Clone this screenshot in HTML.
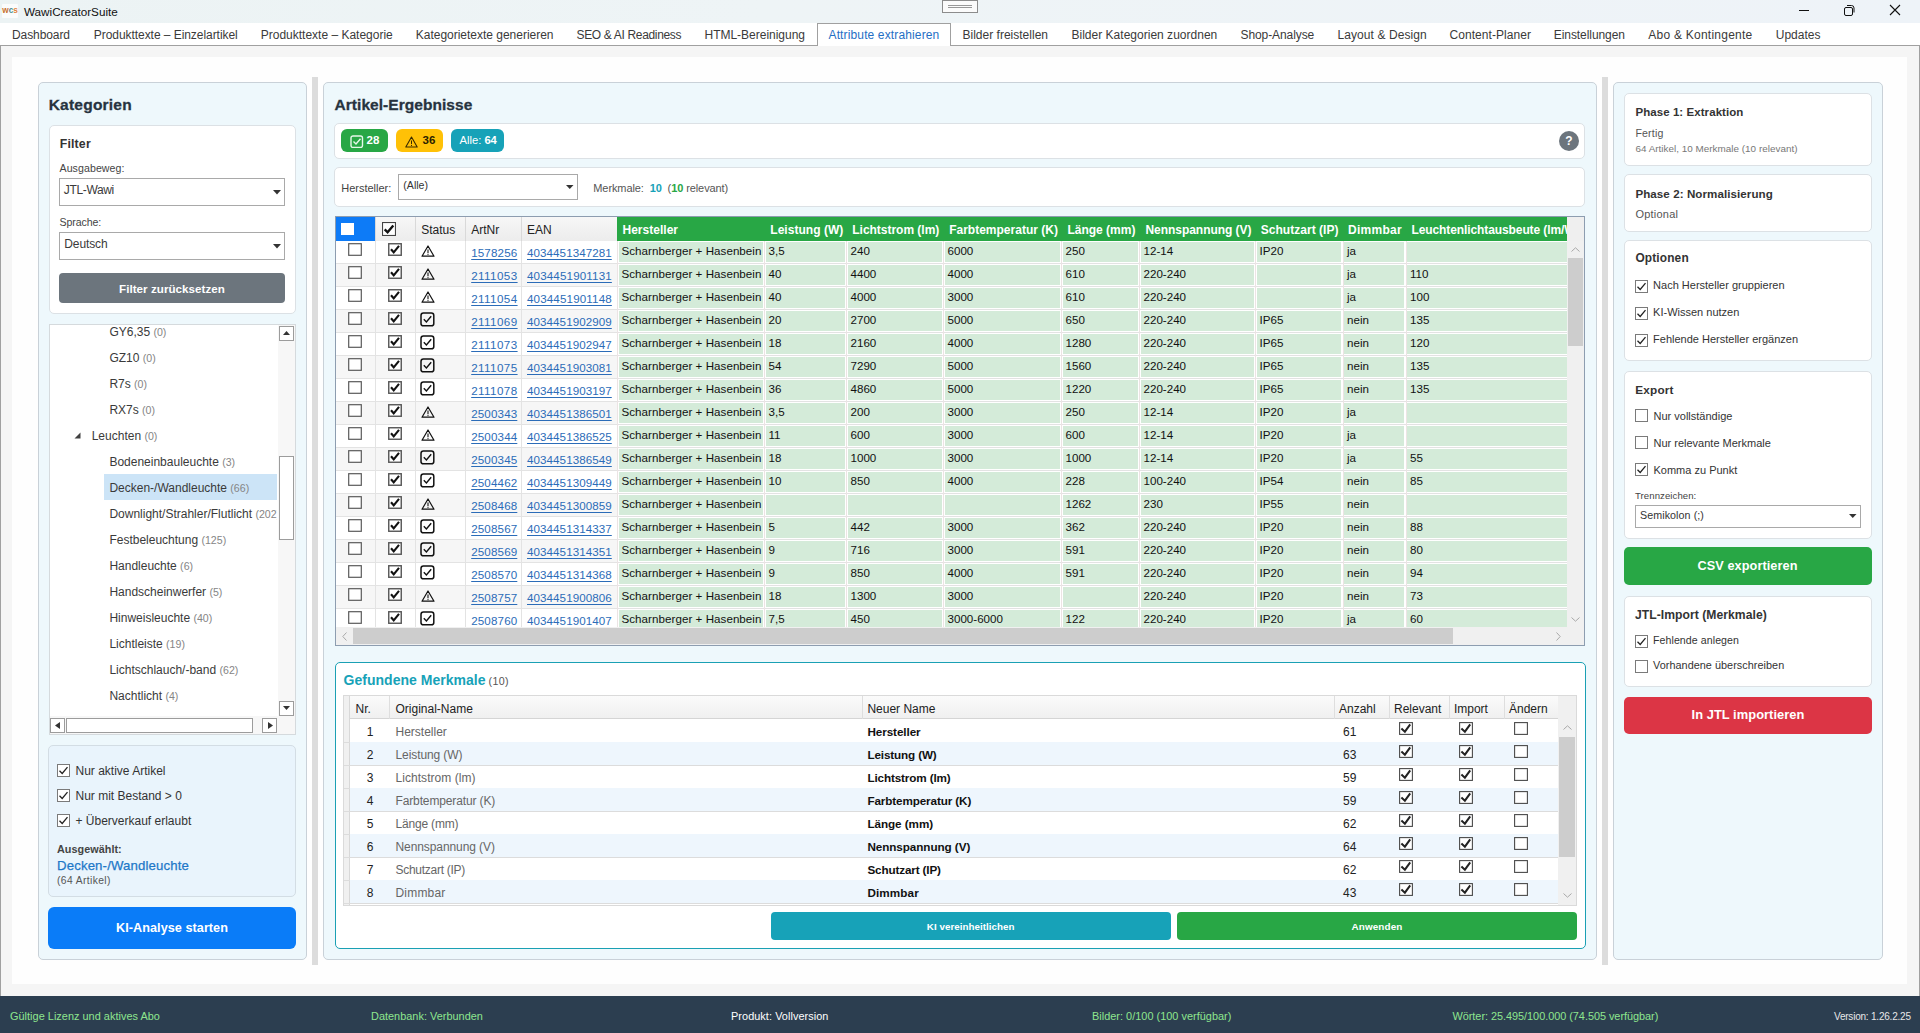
<!DOCTYPE html><html><head><meta charset="utf-8"><title>WawiCreatorSuite</title><style>
*{margin:0;padding:0;box-sizing:border-box}
html,body{width:1920px;height:1033px;overflow:hidden;background:#fff;font-family:"Liberation Sans",sans-serif}
.t{position:absolute;white-space:nowrap}
.b{position:absolute}
</style></head><body>
<div class="b" style="left:0px;top:0px;width:1920px;height:23px;background:linear-gradient(90deg,#ecf3f4,#eef4f6 40%,#eef3f8)"></div>
<div class="b" style="left:2px;top:3.5px;width:16px;height:14px;background:#fbfcfc;border-radius:1px"></div>
<div class="t" style="left:2.3px;top:6.66px;font-size:8.2px;line-height:8.2px;font-weight:bold;color:#222;letter-spacing:0px"><span style="color:#c8702e">w</span><span style="color:#4d8c90">c</span><span style="color:#e0823e">s</span></div>
<div class="t" style="left:24px;top:5.80px;font-size:11.7px;line-height:11.7px;font-weight:normal;color:#111;">WawiCreatorSuite</div>
<svg class="b" style="left:942px;top:0px" width="37" height="14" viewBox="0 0 37 14"><rect x="0.5" y="0.5" width="35" height="12" fill="#fbfbfb" stroke="#8c8c8c" stroke-width="1"/><path d="M6 5.5 H30 M6 7.5 H30" stroke="#8c8c8c" stroke-width="0.9"/></svg>
<div class="b" style="left:1799px;top:10px;width:10px;height:1px;background:#111"></div>
<svg class="b" style="left:1843px;top:4px" width="13" height="12" viewBox="0 0 13 12"><rect x="1.5" y="3.5" width="8" height="8" rx="1.5" fill="none" stroke="#111" stroke-width="1"/><path d="M4 1.5 h4.5 a2.5 2.5 0 0 1 2.5 2.5 v4.5" fill="none" stroke="#111" stroke-width="1"/></svg>
<svg class="b" style="left:1889px;top:4px" width="12" height="12" viewBox="0 0 12 12"><path d="M1 1 L11 11 M11 1 L1 11" stroke="#111" stroke-width="1.1"/></svg>
<div class="b" style="left:0px;top:23px;width:1920px;height:23px;background:#fff"></div>
<div class="b" style="left:0px;top:45px;width:1920px;height:1px;background:#a0a0a0"></div>
<div class="b" style="left:817px;top:23px;width:134px;height:23px;background:#fff;border:1px solid #a0a0a0;border-bottom:none"></div>
<div class="t" style="left:12.0px;top:28.84px;font-size:12px;line-height:12px;font-weight:normal;color:#3a3a3a;letter-spacing:-0.088px;">Dashboard</div>
<div class="t" style="left:93.75px;top:28.84px;font-size:12px;line-height:12px;font-weight:normal;color:#3a3a3a;letter-spacing:-0.052px;">Produkttexte – Einzelartikel</div>
<div class="t" style="left:260.75px;top:28.84px;font-size:12px;line-height:12px;font-weight:normal;color:#3a3a3a;letter-spacing:-0.004px;">Produkttexte – Kategorie</div>
<div class="t" style="left:415.75px;top:28.84px;font-size:12px;line-height:12px;font-weight:normal;color:#3a3a3a;letter-spacing:-0.014px;">Kategorietexte generieren</div>
<div class="t" style="left:576.5px;top:28.84px;font-size:12px;line-height:12px;font-weight:normal;color:#3a3a3a;letter-spacing:-0.337px;">SEO &amp; AI Readiness</div>
<div class="t" style="left:704.5px;top:28.84px;font-size:12px;line-height:12px;font-weight:normal;color:#3a3a3a;letter-spacing:-0.014px;">HTML-Bereinigung</div>
<div class="t" style="left:828.5px;top:28.84px;font-size:12px;line-height:12px;font-weight:normal;color:#1f6fc5;letter-spacing:0.135px;">Attribute extrahieren</div>
<div class="t" style="left:962.5px;top:28.84px;font-size:12px;line-height:12px;font-weight:normal;color:#3a3a3a;letter-spacing:0.008px;">Bilder freistellen</div>
<div class="t" style="left:1071.5px;top:28.84px;font-size:12px;line-height:12px;font-weight:normal;color:#3a3a3a;letter-spacing:0.013px;">Bilder Kategorien zuordnen</div>
<div class="t" style="left:1240.5px;top:28.84px;font-size:12px;line-height:12px;font-weight:normal;color:#3a3a3a;letter-spacing:-0.088px;">Shop-Analyse</div>
<div class="t" style="left:1337.5px;top:28.84px;font-size:12px;line-height:12px;font-weight:normal;color:#3a3a3a;letter-spacing:0.085px;">Layout &amp; Design</div>
<div class="t" style="left:1449.5px;top:28.84px;font-size:12px;line-height:12px;font-weight:normal;color:#3a3a3a;letter-spacing:0.061px;">Content-Planer</div>
<div class="t" style="left:1553.75px;top:28.84px;font-size:12px;line-height:12px;font-weight:normal;color:#3a3a3a;letter-spacing:-0.067px;">Einstellungen</div>
<div class="t" style="left:1648.25px;top:28.84px;font-size:12px;line-height:12px;font-weight:normal;color:#3a3a3a;letter-spacing:0.245px;">Abo &amp; Kontingente</div>
<div class="t" style="left:1775.75px;top:28.84px;font-size:12px;line-height:12px;font-weight:normal;color:#3a3a3a;letter-spacing:0.009px;">Updates</div>
<div class="b" style="left:0px;top:46px;width:1920px;height:950px;background:#f5f5f5;border-left:1px solid #a0a0a0;border-right:1px solid #a0a0a0"></div>
<div class="b" style="left:12px;top:57px;width:1895px;height:927px;background:#fefefe"></div>
<div class="b" style="left:312px;top:77px;width:6px;height:888px;background:#dcdcdc"></div>
<div class="b" style="left:1602px;top:77px;width:6px;height:888px;background:#dcdcdc"></div>
<div class="b" style="left:38px;top:82px;width:269px;height:878px;background:#eef8fc;border:1px solid #c9d1d8;border-radius:5px"></div>
<div class="b" style="left:323px;top:82px;width:1274px;height:878px;background:#eef8fc;border:1px solid #c9d1d8;border-radius:5px"></div>
<div class="b" style="left:1613px;top:82px;width:270px;height:878px;background:#eef8fc;border:1px solid #c9d1d8;border-radius:5px"></div>
<div class="b" style="left:0px;top:996px;width:1920px;height:37px;background:#2c3e50"></div>
<div class="t" style="left:10px;top:1011.07px;font-size:10.9px;line-height:10.9px;font-weight:normal;color:#8ee68e;letter-spacing:0.032px;">Gültige Lizenz und aktives Abo</div>
<div class="t" style="left:371px;top:1011.07px;font-size:10.9px;line-height:10.9px;font-weight:normal;color:#8ee68e;letter-spacing:0.026px;">Datenbank: Verbunden</div>
<div class="t" style="left:731px;top:1011.07px;font-size:10.9px;line-height:10.9px;font-weight:normal;color:#ffffff;letter-spacing:0.061px;">Produkt: Vollversion</div>
<div class="t" style="left:1092px;top:1011.07px;font-size:10.9px;line-height:10.9px;font-weight:normal;color:#8ee68e;letter-spacing:0.027px;">Bilder: 0/100 (100 verfügbar)</div>
<div class="t" style="left:1452.5px;top:1011.07px;font-size:10.9px;line-height:10.9px;font-weight:normal;color:#8ee68e;letter-spacing:-0.031px;">Wörter: 25.495/100.000 (74.505 verfügbar)</div>
<div class="t" style="left:1834px;top:1011.83px;font-size:10px;line-height:10px;font-weight:normal;color:#e8e8e8;letter-spacing:-0.213px;">Version: 1.26.2.25</div>
<div class="t" style="left:48.7px;top:96.88px;font-size:15.5px;line-height:15.5px;font-weight:bold;color:#27333f;letter-spacing:0.227px;-webkit-text-stroke:0.3px #27333f">Kategorien</div>
<div class="b" style="left:49px;top:125px;width:247px;height:189px;background:#fff;border:1px solid #dce1e5;border-radius:5px"></div>
<div class="t" style="left:59.7px;top:138.29px;font-size:12.3px;line-height:12.3px;font-weight:bold;color:#333;letter-spacing:0.186px;">Filter</div>
<div class="t" style="left:59.5px;top:163.03px;font-size:10.6px;line-height:10.6px;font-weight:normal;color:#444;letter-spacing:0.076px;">Ausgabeweg:</div>
<div class="b" style="left:59px;top:178px;width:226px;height:28px;background:#fff;border:1px solid #a9a9a9"></div>
<div class="t" style="left:63.8px;top:183.64px;font-size:12px;line-height:12px;font-weight:normal;color:#3a3a3a;letter-spacing:-0.355px;">JTL-Wawi</div>
<svg class="b" style="left:273px;top:190px" width="8" height="4.5" viewBox="0 0 8 4.5"><path d="M0 0 L8 0 L4.0 4.5 Z" fill="#333"/></svg>
<div class="t" style="left:59.5px;top:216.73px;font-size:10.6px;line-height:10.6px;font-weight:normal;color:#444;letter-spacing:-0.104px;">Sprache:</div>
<div class="b" style="left:59px;top:232px;width:226px;height:28px;background:#fff;border:1px solid #a9a9a9"></div>
<div class="t" style="left:64.3px;top:237.84px;font-size:12px;line-height:12px;font-weight:normal;color:#3a3a3a;letter-spacing:-0.120px;">Deutsch</div>
<svg class="b" style="left:273px;top:244px" width="8" height="4.5" viewBox="0 0 8 4.5"><path d="M0 0 L8 0 L4.0 4.5 Z" fill="#333"/></svg>
<div class="b" style="left:59px;top:273px;width:226px;height:30px;background:#6c757d;border-radius:4px"></div>
<div class="t" style="left:-28.00px;width:400px;text-align:center;top:283.38px;font-size:11.6px;line-height:11.6px;font-weight:bold;color:#fff;letter-spacing:0.051px;">Filter zurücksetzen</div>
<div class="b" style="left:48.5px;top:324px;width:247.5px;height:411px;background:#fff;border:1px solid #d5dadd"></div>
<div class="b" style="left:277.5px;top:325px;width:17.5px;height:409px;background:#f7f7f7"></div>
<div class="b" style="left:49.5px;top:716px;width:228px;height:18px;background:#f7f7f7"></div>
<div class="b" style="left:279px;top:326px;width:15px;height:15px;background:#fff;border:1.5px solid #9c9c9c"></div>
<svg class="b" style="left:283px;top:331px" width="7" height="4" viewBox="0 0 7 4"><path d="M0 4 L7 4 L3.5 0 Z" fill="#333"/></svg>
<div class="b" style="left:279px;top:456px;width:15px;height:84px;background:#fff;border:1.5px solid #9c9c9c"></div>
<div class="b" style="left:279px;top:701px;width:15px;height:15px;background:#fff;border:1.5px solid #9c9c9c"></div>
<svg class="b" style="left:283px;top:706px" width="7" height="4" viewBox="0 0 7 4"><path d="M0 0 L7 0 L3.5 4 Z" fill="#333"/></svg>
<div class="b" style="left:50px;top:718px;width:15px;height:15px;background:#fff;border:1.5px solid #9c9c9c"></div>
<svg class="b" style="left:55px;top:722px" width="5" height="7" viewBox="0 0 5 7"><path d="M5 0 L5 7 L0 3.5 Z" fill="#333"/></svg>
<div class="b" style="left:66px;top:718px;width:187px;height:15px;background:#fff;border:1.5px solid #9c9c9c"></div>
<div class="b" style="left:262px;top:718px;width:15px;height:15px;background:#fff;border:1.5px solid #9c9c9c"></div>
<svg class="b" style="left:268px;top:722px" width="5" height="7" viewBox="0 0 5 7"><path d="M0 0 L0 7 L5 3.5 Z" fill="#333"/></svg>
<div class="b" style="left:104px;top:474px;width:173px;height:26px;background:#cce4f7"></div>
<div class="b" style="left:49px;top:325px;width:228px;height:391px;overflow:hidden">
<div class="t" style="left:60.4px;top:0.94px;font-size:12px;line-height:12px;color:#3a3a3a">GY6,35 <span style="font-size:10.6px;color:#858585">(0)</span></div>
<div class="t" style="left:60.4px;top:26.94px;font-size:12px;line-height:12px;color:#3a3a3a">GZ10 <span style="font-size:10.6px;color:#858585">(0)</span></div>
<div class="t" style="left:60.4px;top:52.94px;font-size:12px;line-height:12px;color:#3a3a3a">R7s <span style="font-size:10.6px;color:#858585">(0)</span></div>
<div class="t" style="left:60.4px;top:78.94px;font-size:12px;line-height:12px;color:#3a3a3a">RX7s <span style="font-size:10.6px;color:#858585">(0)</span></div>
<div class="t" style="left:42.7px;top:104.94px;font-size:12px;line-height:12px;color:#3a3a3a">Leuchten <span style="font-size:10.6px;color:#858585">(0)</span></div>
<div class="t" style="left:60.4px;top:130.94px;font-size:12px;line-height:12px;color:#3a3a3a">Bodeneinbauleuchte <span style="font-size:10.6px;color:#858585">(3)</span></div>
<div class="t" style="left:60.4px;top:156.94px;font-size:12px;line-height:12px;color:#3a3a3a">Decken-/Wandleuchte <span style="font-size:10.6px;color:#858585">(66)</span></div>
<div class="t" style="left:60.4px;top:182.94px;font-size:12px;line-height:12px;color:#3a3a3a">Downlight/Strahler/Flutlicht <span style="font-size:10.6px;color:#858585">(202)</span></div>
<div class="t" style="left:60.4px;top:208.94px;font-size:12px;line-height:12px;color:#3a3a3a">Festbeleuchtung <span style="font-size:10.6px;color:#858585">(125)</span></div>
<div class="t" style="left:60.4px;top:234.94px;font-size:12px;line-height:12px;color:#3a3a3a">Handleuchte <span style="font-size:10.6px;color:#858585">(6)</span></div>
<div class="t" style="left:60.4px;top:260.94px;font-size:12px;line-height:12px;color:#3a3a3a">Handscheinwerfer <span style="font-size:10.6px;color:#858585">(5)</span></div>
<div class="t" style="left:60.4px;top:286.94px;font-size:12px;line-height:12px;color:#3a3a3a">Hinweisleuchte <span style="font-size:10.6px;color:#858585">(40)</span></div>
<div class="t" style="left:60.4px;top:312.94px;font-size:12px;line-height:12px;color:#3a3a3a">Lichtleiste <span style="font-size:10.6px;color:#858585">(19)</span></div>
<div class="t" style="left:60.4px;top:338.94px;font-size:12px;line-height:12px;color:#3a3a3a">Lichtschlauch/-band <span style="font-size:10.6px;color:#858585">(62)</span></div>
<div class="t" style="left:60.4px;top:364.94px;font-size:12px;line-height:12px;color:#3a3a3a">Nachtlicht <span style="font-size:10.6px;color:#858585">(4)</span></div>
</div>
<svg class="b" style="left:74px;top:432px" width="7" height="7" viewBox="0 0 7 7"><path d="M6.5 0.5 L6.5 6.5 L0.5 6.5 Z" fill="#404040"/></svg>
<div class="b" style="left:48px;top:745px;width:248px;height:152px;background:#e9f4fc;border:1px solid #d3dde4;border-radius:5px"></div>
<svg class="b" style="left:57px;top:763.5px" width="13" height="13" viewBox="0 0 13 13"><rect x="0.5" y="0.5" width="12" height="12" fill="#fff" stroke="#7a7a7a" stroke-width="1"/><path d="M2.5 6.8 L5.2 9.5 L10.5 3.2" fill="none" stroke="#222" stroke-width="1.3"/></svg>
<div class="t" style="left:75.5px;top:764.84px;font-size:12px;line-height:12px;color:#333">Nur aktive Artikel</div>
<svg class="b" style="left:57px;top:788.5px" width="13" height="13" viewBox="0 0 13 13"><rect x="0.5" y="0.5" width="12" height="12" fill="#fff" stroke="#7a7a7a" stroke-width="1"/><path d="M2.5 6.8 L5.2 9.5 L10.5 3.2" fill="none" stroke="#222" stroke-width="1.3"/></svg>
<div class="t" style="left:75.5px;top:789.84px;font-size:12px;line-height:12px;color:#333">Nur mit Bestand &gt; 0</div>
<svg class="b" style="left:57px;top:813.5px" width="13" height="13" viewBox="0 0 13 13"><rect x="0.5" y="0.5" width="12" height="12" fill="#fff" stroke="#7a7a7a" stroke-width="1"/><path d="M2.5 6.8 L5.2 9.5 L10.5 3.2" fill="none" stroke="#222" stroke-width="1.3"/></svg>
<div class="t" style="left:75.5px;top:814.84px;font-size:12px;line-height:12px;color:#333">+ Überverkauf erlaubt</div>
<div class="t" style="left:57px;top:843.56px;font-size:10.8px;line-height:10.8px;font-weight:bold;color:#444;letter-spacing:0.050px;">Ausgewählt:</div>
<div class="t" style="left:57px;top:859.03px;font-size:13.2px;line-height:13.2px;font-weight:normal;color:#1e78c8;letter-spacing:0.146px;-webkit-text-stroke:0.25px #1e78c8">Decken-/Wandleuchte</div>
<div class="t" style="left:57px;top:875.98px;font-size:10.3px;line-height:10.3px;font-weight:normal;color:#555;letter-spacing:0.379px;">(64 Artikel)</div>
<div class="b" style="left:48px;top:907px;width:248px;height:42px;background:#0a7cf8;border-radius:6px"></div>
<div class="t" style="left:-28.00px;width:400px;text-align:center;top:922.09px;font-size:12.65px;line-height:12.65px;font-weight:bold;color:#fff;letter-spacing:0.054px;">KI-Analyse starten</div>
<div class="t" style="left:334.5px;top:96.88px;font-size:15.5px;line-height:15.5px;font-weight:bold;color:#27333f;letter-spacing:0.046px;-webkit-text-stroke:0.3px #27333f">Artikel-Ergebnisse</div>
<div class="b" style="left:334px;top:123px;width:1251px;height:36px;background:#fff;border:1px solid #dce1e5;border-radius:5px"></div>
<div class="b" style="left:341px;top:129px;width:47px;height:23px;background:#28a745;border-radius:6px"></div>
<svg class="b" style="left:349.5px;top:134.5px" width="14" height="13" viewBox="0 0 14 13"><rect x="1" y="1" width="11.5" height="11.5" rx="2" fill="none" stroke="#e6f7e9" stroke-width="1.4"/><path d="M3.5 6.5 L6 9 L10.5 3.8" fill="none" stroke="#e6f7e9" stroke-width="1.4"/></svg>
<div class="t" style="left:366.5px;top:134.67px;font-size:11.5px;line-height:11.5px;font-weight:bold;color:#fff;">28</div>
<div class="b" style="left:396px;top:129px;width:47px;height:23px;background:#ffc107;border-radius:6px"></div>
<svg class="b" style="left:405px;top:135.5px" width="13" height="12" viewBox="0 0 13 12"><path d="M6.5 1 L12.2 11 L0.8 11 Z" fill="none" stroke="#3a2c00" stroke-width="1.1" stroke-linejoin="round"/><path d="M6.5 4.5 V8" stroke="#3a2c00" stroke-width="1"/><circle cx="6.5" cy="9.4" r="0.55" fill="#3a2c00"/></svg>
<div class="t" style="left:422.5px;top:134.67px;font-size:11.5px;line-height:11.5px;font-weight:bold;color:#2b2200;">36</div>
<div class="b" style="left:451px;top:129px;width:53px;height:23px;background:#17a2b8;border-radius:6px"></div>
<div class="t" style="left:459.5px;top:134.92px;font-size:11.2px;line-height:11.2px;font-weight:normal;color:#fff;">Alle: <b>64</b></div>
<div class="b" style="left:1559px;top:131px;width:20px;height:20px;background:#6c757d;border-radius:50%"></div>
<div class="t" style="left:1559.00px;width:20px;text-align:center;top:135.34px;font-size:12px;line-height:12px;font-weight:bold;color:#fff;">?</div>
<div class="b" style="left:334px;top:167px;width:1251px;height:40px;background:#fff;border:1px solid #dce1e5;border-radius:5px"></div>
<div class="t" style="left:341.25px;top:182.69px;font-size:11px;line-height:11px;font-weight:normal;color:#444;letter-spacing:-0.012px;">Hersteller:</div>
<div class="b" style="left:398px;top:174px;width:180px;height:26px;background:#fff;border:1px solid #a9a9a9"></div>
<div class="t" style="left:403.3px;top:180.33px;font-size:10.6px;line-height:10.6px;font-weight:normal;color:#333;">(Alle)</div>
<svg class="b" style="left:566px;top:185px" width="7.5" height="4" viewBox="0 0 7.5 4"><path d="M0 0 L7.5 0 L3.75 4 Z" fill="#333"/></svg>
<div class="t" style="left:593.3px;top:182.69px;font-size:11px;line-height:11px;font-weight:normal;color:#555;letter-spacing:-0.1px">Merkmale:&nbsp; <b style="color:#17a2b8">10</b>&nbsp; (<b style="color:#28a745">10</b> relevant)</div>
<div class="b" style="left:335px;top:216px;width:1250px;height:430px;background:#fff;border:1px solid #8d9db0"></div>
<div class="b" style="left:336px;top:217px;width:39px;height:24px;background:#0d7bf7"></div>
<div class="b" style="left:341px;top:222.5px;width:13px;height:12px;background:#fff"></div>
<div class="b" style="left:375px;top:217px;width:242px;height:24px;background:linear-gradient(#f7f7f7,#ececec)"></div>
<div class="b" style="left:375px;top:217px;width:1px;height:24px;background:#d9d9d9"></div>
<div class="b" style="left:415px;top:217px;width:1px;height:24px;background:#d9d9d9"></div>
<div class="b" style="left:465px;top:217px;width:1px;height:24px;background:#d9d9d9"></div>
<div class="b" style="left:521px;top:217px;width:1px;height:24px;background:#d9d9d9"></div>
<svg class="b" style="left:382px;top:222px" width="14" height="14" viewBox="0 0 13 13"><rect x="0.5" y="0.5" width="12" height="12" fill="#fff" stroke="#444" stroke-width="1"/><path d="M2.5 6.8 L5.2 9.5 L10.5 3.2" fill="none" stroke="#111" stroke-width="2.2"/></svg>
<div class="t" style="left:421.2px;top:223.54px;font-size:12px;line-height:12px;font-weight:normal;color:#222;">Status</div>
<div class="t" style="left:471.25px;top:223.54px;font-size:12px;line-height:12px;font-weight:normal;color:#222;">ArtNr</div>
<div class="t" style="left:527px;top:223.54px;font-size:12px;line-height:12px;font-weight:normal;color:#222;">EAN</div>
<div class="b" style="left:617px;top:217px;width:950px;height:24px;background:#28a745"></div>
<div class="b" style="left:617px;top:217px;width:950px;height:24px;overflow:hidden">
<div class="t" style="left:5.5px;top:6.84px;font-size:12px;line-height:12px;font-weight:bold;color:#fff;letter-spacing:0.015px;">Hersteller</div>
<div class="t" style="left:153.3px;top:6.84px;font-size:12px;line-height:12px;font-weight:bold;color:#fff;letter-spacing:0.032px;">Leistung (W)</div>
<div class="t" style="left:235.3px;top:6.84px;font-size:12px;line-height:12px;font-weight:bold;color:#fff;letter-spacing:-0.024px;">Lichtstrom (lm)</div>
<div class="t" style="left:332.2px;top:6.84px;font-size:12px;line-height:12px;font-weight:bold;color:#fff;letter-spacing:0.001px;">Farbtemperatur (K)</div>
<div class="t" style="left:450.4px;top:6.84px;font-size:12px;line-height:12px;font-weight:bold;color:#fff;letter-spacing:-0.000px;">Länge (mm)</div>
<div class="t" style="left:528.5px;top:6.84px;font-size:12px;line-height:12px;font-weight:bold;color:#fff;letter-spacing:-0.044px;">Nennspannung (V)</div>
<div class="t" style="left:643.7px;top:6.84px;font-size:12px;line-height:12px;font-weight:bold;color:#fff;letter-spacing:0.036px;">Schutzart (IP)</div>
<div class="t" style="left:731.0px;top:6.84px;font-size:12px;line-height:12px;font-weight:bold;color:#fff;letter-spacing:0.281px;">Dimmbar</div>
<div class="t" style="left:794.4px;top:6.84px;font-size:12px;line-height:12px;font-weight:bold;color:#fff;letter-spacing:-0.094px;">Leuchtenlichtausbeute (lm/W)</div>
</div>
<div class="b" style="left:1567px;top:217px;width:17px;height:24px;background:#efefef"></div>
<div class="b" style="left:336px;top:241px;width:1231px;height:386px;overflow:hidden">
<div class="b" style="left:0.0px;top:22.0px;width:1231.0px;height:1.0px;background:#e3e3e3"></div>
<div class="b" style="left:39.0px;top:-1.0px;width:1.0px;height:23.0px;background:#e3e3e3"></div>
<div class="b" style="left:79.0px;top:-1.0px;width:1.0px;height:23.0px;background:#e3e3e3"></div>
<div class="b" style="left:129.0px;top:-1.0px;width:1.0px;height:23.0px;background:#e3e3e3"></div>
<div class="b" style="left:185.0px;top:-1.0px;width:1.0px;height:23.0px;background:#e3e3e3"></div>
<div class="b" style="left:281.0px;top:-1.0px;width:1.0px;height:23.0px;background:#e3e3e3"></div>
<div class="b" style="left:282.5px;top:1.0px;width:144.0px;height:20.0px;background:#d4ebd9"></div>
<div class="b" style="left:281.0px;top:-1.0px;width:1.0px;height:23.0px;background:#ece4e4"></div>
<div class="b" style="left:429.5px;top:1.0px;width:79.0px;height:20.0px;background:#d4ebd9"></div>
<div class="b" style="left:428.0px;top:-1.0px;width:1.0px;height:23.0px;background:#ece4e4"></div>
<div class="b" style="left:511.5px;top:1.0px;width:94.0px;height:20.0px;background:#d4ebd9"></div>
<div class="b" style="left:510.0px;top:-1.0px;width:1.0px;height:23.0px;background:#ece4e4"></div>
<div class="b" style="left:608.5px;top:1.0px;width:115.0px;height:20.0px;background:#d4ebd9"></div>
<div class="b" style="left:607.0px;top:-1.0px;width:1.0px;height:23.0px;background:#ece4e4"></div>
<div class="b" style="left:726.5px;top:1.0px;width:75.0px;height:20.0px;background:#d4ebd9"></div>
<div class="b" style="left:725.0px;top:-1.0px;width:1.0px;height:23.0px;background:#ece4e4"></div>
<div class="b" style="left:804.5px;top:1.0px;width:113.0px;height:20.0px;background:#d4ebd9"></div>
<div class="b" style="left:803.0px;top:-1.0px;width:1.0px;height:23.0px;background:#ece4e4"></div>
<div class="b" style="left:920.5px;top:1.0px;width:84.5px;height:20.0px;background:#d4ebd9"></div>
<div class="b" style="left:919.0px;top:-1.0px;width:1.0px;height:23.0px;background:#ece4e4"></div>
<div class="b" style="left:1008.0px;top:1.0px;width:60.0px;height:20.0px;background:#d4ebd9"></div>
<div class="b" style="left:1006.5px;top:-1.0px;width:1.0px;height:23.0px;background:#ece4e4"></div>
<div class="b" style="left:1071.0px;top:1.0px;width:160.0px;height:20.0px;background:#d4ebd9"></div>
<div class="b" style="left:1069.5px;top:-1.0px;width:1.0px;height:23.0px;background:#ece4e4"></div>
<svg class="b" style="left:12px;top:1.6999999999999886px" width="14" height="13" viewBox="0 0 14 13"><rect x="0.7" y="0.7" width="12.6" height="11.6" fill="#fff" stroke="#5a5a5a" stroke-width="1.2"/></svg>
<svg class="b" style="left:52px;top:1.6999999999999886px" width="14" height="13" viewBox="0 0 14 13"><rect x="0.75" y="0.75" width="12.5" height="11.5" fill="#fff" stroke="#555" stroke-width="1.4"/><path d="M3 6.3 L5.7 9.3 L11 2.8" fill="none" stroke="#111" stroke-width="2.1"/></svg>
<svg class="b" style="left:84.5px;top:4px" width="14" height="12" viewBox="0 0 14 12"><path d="M7 1 L13 11.2 L1 11.2 Z" fill="none" stroke="#111" stroke-width="1.2" stroke-linejoin="round"/><path d="M7 4.5 V8.3" stroke="#111" stroke-width="1.1"/><circle cx="7" cy="9.6" r="0.6" fill="#111"/></svg>
<div class="t" style="left:135.2px;top:5.68px;font-size:11.6px;line-height:11.6px;color:#2b6cb8;text-decoration:underline;text-underline-offset:1.5px;letter-spacing:0.140px;">1578256</div>
<div class="t" style="left:191.0px;top:5.68px;font-size:11.6px;line-height:11.6px;color:#2b6cb8;text-decoration:underline;text-underline-offset:1.5px;letter-spacing:0.073px;">4034451347281</div>
<div class="t" style="left:285.5px;top:3.98px;font-size:11.6px;line-height:11.6px;color:#111;letter-spacing:0.045px;">Scharnberger + Hasenbein</div>
<div class="t" style="left:432.5px;top:3.98px;font-size:11.6px;line-height:11.6px;color:#111">3,5</div>
<div class="t" style="left:514.5px;top:3.98px;font-size:11.6px;line-height:11.6px;color:#111">240</div>
<div class="t" style="left:611.5px;top:3.98px;font-size:11.6px;line-height:11.6px;color:#111">6000</div>
<div class="t" style="left:729.5px;top:3.98px;font-size:11.6px;line-height:11.6px;color:#111">250</div>
<div class="t" style="left:807.5px;top:3.98px;font-size:11.6px;line-height:11.6px;color:#111">12-14</div>
<div class="t" style="left:923.5px;top:3.98px;font-size:11.6px;line-height:11.6px;color:#111">IP20</div>
<div class="t" style="left:1011.0px;top:3.98px;font-size:11.6px;line-height:11.6px;color:#111">ja</div>
<div class="b" style="left:0.0px;top:23.0px;width:281.0px;height:22.0px;background:#f6f6f6"></div>
<div class="b" style="left:0.0px;top:45.0px;width:1231.0px;height:1.0px;background:#e3e3e3"></div>
<div class="b" style="left:39.0px;top:22.0px;width:1.0px;height:23.0px;background:#e3e3e3"></div>
<div class="b" style="left:79.0px;top:22.0px;width:1.0px;height:23.0px;background:#e3e3e3"></div>
<div class="b" style="left:129.0px;top:22.0px;width:1.0px;height:23.0px;background:#e3e3e3"></div>
<div class="b" style="left:185.0px;top:22.0px;width:1.0px;height:23.0px;background:#e3e3e3"></div>
<div class="b" style="left:281.0px;top:22.0px;width:1.0px;height:23.0px;background:#e3e3e3"></div>
<div class="b" style="left:282.5px;top:24.0px;width:144.0px;height:20.0px;background:#d4ebd9"></div>
<div class="b" style="left:281.0px;top:22.0px;width:1.0px;height:23.0px;background:#ece4e4"></div>
<div class="b" style="left:429.5px;top:24.0px;width:79.0px;height:20.0px;background:#d4ebd9"></div>
<div class="b" style="left:428.0px;top:22.0px;width:1.0px;height:23.0px;background:#ece4e4"></div>
<div class="b" style="left:511.5px;top:24.0px;width:94.0px;height:20.0px;background:#d4ebd9"></div>
<div class="b" style="left:510.0px;top:22.0px;width:1.0px;height:23.0px;background:#ece4e4"></div>
<div class="b" style="left:608.5px;top:24.0px;width:115.0px;height:20.0px;background:#d4ebd9"></div>
<div class="b" style="left:607.0px;top:22.0px;width:1.0px;height:23.0px;background:#ece4e4"></div>
<div class="b" style="left:726.5px;top:24.0px;width:75.0px;height:20.0px;background:#d4ebd9"></div>
<div class="b" style="left:725.0px;top:22.0px;width:1.0px;height:23.0px;background:#ece4e4"></div>
<div class="b" style="left:804.5px;top:24.0px;width:113.0px;height:20.0px;background:#d4ebd9"></div>
<div class="b" style="left:803.0px;top:22.0px;width:1.0px;height:23.0px;background:#ece4e4"></div>
<div class="b" style="left:920.5px;top:24.0px;width:84.5px;height:20.0px;background:#d4ebd9"></div>
<div class="b" style="left:919.0px;top:22.0px;width:1.0px;height:23.0px;background:#ece4e4"></div>
<div class="b" style="left:1008.0px;top:24.0px;width:60.0px;height:20.0px;background:#d4ebd9"></div>
<div class="b" style="left:1006.5px;top:22.0px;width:1.0px;height:23.0px;background:#ece4e4"></div>
<div class="b" style="left:1071.0px;top:24.0px;width:160.0px;height:20.0px;background:#d4ebd9"></div>
<div class="b" style="left:1069.5px;top:22.0px;width:1.0px;height:23.0px;background:#ece4e4"></div>
<svg class="b" style="left:12px;top:24.69999999999999px" width="14" height="13" viewBox="0 0 14 13"><rect x="0.7" y="0.7" width="12.6" height="11.6" fill="#fff" stroke="#5a5a5a" stroke-width="1.2"/></svg>
<svg class="b" style="left:52px;top:24.69999999999999px" width="14" height="13" viewBox="0 0 14 13"><rect x="0.75" y="0.75" width="12.5" height="11.5" fill="#fff" stroke="#555" stroke-width="1.4"/><path d="M3 6.3 L5.7 9.3 L11 2.8" fill="none" stroke="#111" stroke-width="2.1"/></svg>
<svg class="b" style="left:84.5px;top:27px" width="14" height="12" viewBox="0 0 14 12"><path d="M7 1 L13 11.2 L1 11.2 Z" fill="none" stroke="#111" stroke-width="1.2" stroke-linejoin="round"/><path d="M7 4.5 V8.3" stroke="#111" stroke-width="1.1"/><circle cx="7" cy="9.6" r="0.6" fill="#111"/></svg>
<div class="t" style="left:135.2px;top:28.68px;font-size:11.6px;line-height:11.6px;color:#2b6cb8;text-decoration:underline;text-underline-offset:1.5px;letter-spacing:0.427px;">2111053</div>
<div class="t" style="left:191.0px;top:28.68px;font-size:11.6px;line-height:11.6px;color:#2b6cb8;text-decoration:underline;text-underline-offset:1.5px;letter-spacing:0.145px;">4034451901131</div>
<div class="t" style="left:285.5px;top:26.98px;font-size:11.6px;line-height:11.6px;color:#111;letter-spacing:0.045px;">Scharnberger + Hasenbein</div>
<div class="t" style="left:432.5px;top:26.98px;font-size:11.6px;line-height:11.6px;color:#111">40</div>
<div class="t" style="left:514.5px;top:26.98px;font-size:11.6px;line-height:11.6px;color:#111">4400</div>
<div class="t" style="left:611.5px;top:26.98px;font-size:11.6px;line-height:11.6px;color:#111">4000</div>
<div class="t" style="left:729.5px;top:26.98px;font-size:11.6px;line-height:11.6px;color:#111">610</div>
<div class="t" style="left:807.5px;top:26.98px;font-size:11.6px;line-height:11.6px;color:#111">220-240</div>
<div class="t" style="left:1011.0px;top:26.98px;font-size:11.6px;line-height:11.6px;color:#111">ja</div>
<div class="t" style="left:1074.0px;top:26.98px;font-size:11.6px;line-height:11.6px;color:#111">110</div>
<div class="b" style="left:0.0px;top:68.0px;width:1231.0px;height:1.0px;background:#e3e3e3"></div>
<div class="b" style="left:39.0px;top:45.0px;width:1.0px;height:23.0px;background:#e3e3e3"></div>
<div class="b" style="left:79.0px;top:45.0px;width:1.0px;height:23.0px;background:#e3e3e3"></div>
<div class="b" style="left:129.0px;top:45.0px;width:1.0px;height:23.0px;background:#e3e3e3"></div>
<div class="b" style="left:185.0px;top:45.0px;width:1.0px;height:23.0px;background:#e3e3e3"></div>
<div class="b" style="left:281.0px;top:45.0px;width:1.0px;height:23.0px;background:#e3e3e3"></div>
<div class="b" style="left:282.5px;top:47.0px;width:144.0px;height:20.0px;background:#d4ebd9"></div>
<div class="b" style="left:281.0px;top:45.0px;width:1.0px;height:23.0px;background:#ece4e4"></div>
<div class="b" style="left:429.5px;top:47.0px;width:79.0px;height:20.0px;background:#d4ebd9"></div>
<div class="b" style="left:428.0px;top:45.0px;width:1.0px;height:23.0px;background:#ece4e4"></div>
<div class="b" style="left:511.5px;top:47.0px;width:94.0px;height:20.0px;background:#d4ebd9"></div>
<div class="b" style="left:510.0px;top:45.0px;width:1.0px;height:23.0px;background:#ece4e4"></div>
<div class="b" style="left:608.5px;top:47.0px;width:115.0px;height:20.0px;background:#d4ebd9"></div>
<div class="b" style="left:607.0px;top:45.0px;width:1.0px;height:23.0px;background:#ece4e4"></div>
<div class="b" style="left:726.5px;top:47.0px;width:75.0px;height:20.0px;background:#d4ebd9"></div>
<div class="b" style="left:725.0px;top:45.0px;width:1.0px;height:23.0px;background:#ece4e4"></div>
<div class="b" style="left:804.5px;top:47.0px;width:113.0px;height:20.0px;background:#d4ebd9"></div>
<div class="b" style="left:803.0px;top:45.0px;width:1.0px;height:23.0px;background:#ece4e4"></div>
<div class="b" style="left:920.5px;top:47.0px;width:84.5px;height:20.0px;background:#d4ebd9"></div>
<div class="b" style="left:919.0px;top:45.0px;width:1.0px;height:23.0px;background:#ece4e4"></div>
<div class="b" style="left:1008.0px;top:47.0px;width:60.0px;height:20.0px;background:#d4ebd9"></div>
<div class="b" style="left:1006.5px;top:45.0px;width:1.0px;height:23.0px;background:#ece4e4"></div>
<div class="b" style="left:1071.0px;top:47.0px;width:160.0px;height:20.0px;background:#d4ebd9"></div>
<div class="b" style="left:1069.5px;top:45.0px;width:1.0px;height:23.0px;background:#ece4e4"></div>
<svg class="b" style="left:12px;top:47.69999999999999px" width="14" height="13" viewBox="0 0 14 13"><rect x="0.7" y="0.7" width="12.6" height="11.6" fill="#fff" stroke="#5a5a5a" stroke-width="1.2"/></svg>
<svg class="b" style="left:52px;top:47.69999999999999px" width="14" height="13" viewBox="0 0 14 13"><rect x="0.75" y="0.75" width="12.5" height="11.5" fill="#fff" stroke="#555" stroke-width="1.4"/><path d="M3 6.3 L5.7 9.3 L11 2.8" fill="none" stroke="#111" stroke-width="2.1"/></svg>
<svg class="b" style="left:84.5px;top:50px" width="14" height="12" viewBox="0 0 14 12"><path d="M7 1 L13 11.2 L1 11.2 Z" fill="none" stroke="#111" stroke-width="1.2" stroke-linejoin="round"/><path d="M7 4.5 V8.3" stroke="#111" stroke-width="1.1"/><circle cx="7" cy="9.6" r="0.6" fill="#111"/></svg>
<div class="t" style="left:135.2px;top:51.68px;font-size:11.6px;line-height:11.6px;color:#2b6cb8;text-decoration:underline;text-underline-offset:1.5px;letter-spacing:0.427px;">2111054</div>
<div class="t" style="left:191.0px;top:51.68px;font-size:11.6px;line-height:11.6px;color:#2b6cb8;text-decoration:underline;text-underline-offset:1.5px;letter-spacing:0.145px;">4034451901148</div>
<div class="t" style="left:285.5px;top:49.98px;font-size:11.6px;line-height:11.6px;color:#111;letter-spacing:0.045px;">Scharnberger + Hasenbein</div>
<div class="t" style="left:432.5px;top:49.98px;font-size:11.6px;line-height:11.6px;color:#111">40</div>
<div class="t" style="left:514.5px;top:49.98px;font-size:11.6px;line-height:11.6px;color:#111">4000</div>
<div class="t" style="left:611.5px;top:49.98px;font-size:11.6px;line-height:11.6px;color:#111">3000</div>
<div class="t" style="left:729.5px;top:49.98px;font-size:11.6px;line-height:11.6px;color:#111">610</div>
<div class="t" style="left:807.5px;top:49.98px;font-size:11.6px;line-height:11.6px;color:#111">220-240</div>
<div class="t" style="left:1011.0px;top:49.98px;font-size:11.6px;line-height:11.6px;color:#111">ja</div>
<div class="t" style="left:1074.0px;top:49.98px;font-size:11.6px;line-height:11.6px;color:#111">100</div>
<div class="b" style="left:0.0px;top:69.0px;width:281.0px;height:22.0px;background:#f6f6f6"></div>
<div class="b" style="left:0.0px;top:91.0px;width:1231.0px;height:1.0px;background:#e3e3e3"></div>
<div class="b" style="left:39.0px;top:68.0px;width:1.0px;height:23.0px;background:#e3e3e3"></div>
<div class="b" style="left:79.0px;top:68.0px;width:1.0px;height:23.0px;background:#e3e3e3"></div>
<div class="b" style="left:129.0px;top:68.0px;width:1.0px;height:23.0px;background:#e3e3e3"></div>
<div class="b" style="left:185.0px;top:68.0px;width:1.0px;height:23.0px;background:#e3e3e3"></div>
<div class="b" style="left:281.0px;top:68.0px;width:1.0px;height:23.0px;background:#e3e3e3"></div>
<div class="b" style="left:282.5px;top:70.0px;width:144.0px;height:20.0px;background:#d4ebd9"></div>
<div class="b" style="left:281.0px;top:68.0px;width:1.0px;height:23.0px;background:#ece4e4"></div>
<div class="b" style="left:429.5px;top:70.0px;width:79.0px;height:20.0px;background:#d4ebd9"></div>
<div class="b" style="left:428.0px;top:68.0px;width:1.0px;height:23.0px;background:#ece4e4"></div>
<div class="b" style="left:511.5px;top:70.0px;width:94.0px;height:20.0px;background:#d4ebd9"></div>
<div class="b" style="left:510.0px;top:68.0px;width:1.0px;height:23.0px;background:#ece4e4"></div>
<div class="b" style="left:608.5px;top:70.0px;width:115.0px;height:20.0px;background:#d4ebd9"></div>
<div class="b" style="left:607.0px;top:68.0px;width:1.0px;height:23.0px;background:#ece4e4"></div>
<div class="b" style="left:726.5px;top:70.0px;width:75.0px;height:20.0px;background:#d4ebd9"></div>
<div class="b" style="left:725.0px;top:68.0px;width:1.0px;height:23.0px;background:#ece4e4"></div>
<div class="b" style="left:804.5px;top:70.0px;width:113.0px;height:20.0px;background:#d4ebd9"></div>
<div class="b" style="left:803.0px;top:68.0px;width:1.0px;height:23.0px;background:#ece4e4"></div>
<div class="b" style="left:920.5px;top:70.0px;width:84.5px;height:20.0px;background:#d4ebd9"></div>
<div class="b" style="left:919.0px;top:68.0px;width:1.0px;height:23.0px;background:#ece4e4"></div>
<div class="b" style="left:1008.0px;top:70.0px;width:60.0px;height:20.0px;background:#d4ebd9"></div>
<div class="b" style="left:1006.5px;top:68.0px;width:1.0px;height:23.0px;background:#ece4e4"></div>
<div class="b" style="left:1071.0px;top:70.0px;width:160.0px;height:20.0px;background:#d4ebd9"></div>
<div class="b" style="left:1069.5px;top:68.0px;width:1.0px;height:23.0px;background:#ece4e4"></div>
<svg class="b" style="left:12px;top:70.69999999999999px" width="14" height="13" viewBox="0 0 14 13"><rect x="0.7" y="0.7" width="12.6" height="11.6" fill="#fff" stroke="#5a5a5a" stroke-width="1.2"/></svg>
<svg class="b" style="left:52px;top:70.69999999999999px" width="14" height="13" viewBox="0 0 14 13"><rect x="0.75" y="0.75" width="12.5" height="11.5" fill="#fff" stroke="#555" stroke-width="1.4"/><path d="M3 6.3 L5.7 9.3 L11 2.8" fill="none" stroke="#111" stroke-width="2.1"/></svg>
<svg class="b" style="left:84px;top:70.5px" width="15" height="15" viewBox="0 0 15 15"><rect x="1" y="1" width="12.8" height="12.8" rx="2.4" fill="none" stroke="#111" stroke-width="1.5"/><path d="M3.8 7.3 L6.4 9.9 L11.2 4.3" fill="none" stroke="#111" stroke-width="1.4"/></svg>
<div class="t" style="left:135.2px;top:74.68px;font-size:11.6px;line-height:11.6px;color:#2b6cb8;text-decoration:underline;text-underline-offset:1.5px;letter-spacing:0.427px;">2111069</div>
<div class="t" style="left:191.0px;top:74.68px;font-size:11.6px;line-height:11.6px;color:#2b6cb8;text-decoration:underline;text-underline-offset:1.5px;letter-spacing:0.073px;">4034451902909</div>
<div class="t" style="left:285.5px;top:72.98px;font-size:11.6px;line-height:11.6px;color:#111;letter-spacing:0.045px;">Scharnberger + Hasenbein</div>
<div class="t" style="left:432.5px;top:72.98px;font-size:11.6px;line-height:11.6px;color:#111">20</div>
<div class="t" style="left:514.5px;top:72.98px;font-size:11.6px;line-height:11.6px;color:#111">2700</div>
<div class="t" style="left:611.5px;top:72.98px;font-size:11.6px;line-height:11.6px;color:#111">5000</div>
<div class="t" style="left:729.5px;top:72.98px;font-size:11.6px;line-height:11.6px;color:#111">650</div>
<div class="t" style="left:807.5px;top:72.98px;font-size:11.6px;line-height:11.6px;color:#111">220-240</div>
<div class="t" style="left:923.5px;top:72.98px;font-size:11.6px;line-height:11.6px;color:#111">IP65</div>
<div class="t" style="left:1011.0px;top:72.98px;font-size:11.6px;line-height:11.6px;color:#111">nein</div>
<div class="t" style="left:1074.0px;top:72.98px;font-size:11.6px;line-height:11.6px;color:#111">135</div>
<div class="b" style="left:0.0px;top:114.0px;width:1231.0px;height:1.0px;background:#e3e3e3"></div>
<div class="b" style="left:39.0px;top:91.0px;width:1.0px;height:23.0px;background:#e3e3e3"></div>
<div class="b" style="left:79.0px;top:91.0px;width:1.0px;height:23.0px;background:#e3e3e3"></div>
<div class="b" style="left:129.0px;top:91.0px;width:1.0px;height:23.0px;background:#e3e3e3"></div>
<div class="b" style="left:185.0px;top:91.0px;width:1.0px;height:23.0px;background:#e3e3e3"></div>
<div class="b" style="left:281.0px;top:91.0px;width:1.0px;height:23.0px;background:#e3e3e3"></div>
<div class="b" style="left:282.5px;top:93.0px;width:144.0px;height:20.0px;background:#d4ebd9"></div>
<div class="b" style="left:281.0px;top:91.0px;width:1.0px;height:23.0px;background:#ece4e4"></div>
<div class="b" style="left:429.5px;top:93.0px;width:79.0px;height:20.0px;background:#d4ebd9"></div>
<div class="b" style="left:428.0px;top:91.0px;width:1.0px;height:23.0px;background:#ece4e4"></div>
<div class="b" style="left:511.5px;top:93.0px;width:94.0px;height:20.0px;background:#d4ebd9"></div>
<div class="b" style="left:510.0px;top:91.0px;width:1.0px;height:23.0px;background:#ece4e4"></div>
<div class="b" style="left:608.5px;top:93.0px;width:115.0px;height:20.0px;background:#d4ebd9"></div>
<div class="b" style="left:607.0px;top:91.0px;width:1.0px;height:23.0px;background:#ece4e4"></div>
<div class="b" style="left:726.5px;top:93.0px;width:75.0px;height:20.0px;background:#d4ebd9"></div>
<div class="b" style="left:725.0px;top:91.0px;width:1.0px;height:23.0px;background:#ece4e4"></div>
<div class="b" style="left:804.5px;top:93.0px;width:113.0px;height:20.0px;background:#d4ebd9"></div>
<div class="b" style="left:803.0px;top:91.0px;width:1.0px;height:23.0px;background:#ece4e4"></div>
<div class="b" style="left:920.5px;top:93.0px;width:84.5px;height:20.0px;background:#d4ebd9"></div>
<div class="b" style="left:919.0px;top:91.0px;width:1.0px;height:23.0px;background:#ece4e4"></div>
<div class="b" style="left:1008.0px;top:93.0px;width:60.0px;height:20.0px;background:#d4ebd9"></div>
<div class="b" style="left:1006.5px;top:91.0px;width:1.0px;height:23.0px;background:#ece4e4"></div>
<div class="b" style="left:1071.0px;top:93.0px;width:160.0px;height:20.0px;background:#d4ebd9"></div>
<div class="b" style="left:1069.5px;top:91.0px;width:1.0px;height:23.0px;background:#ece4e4"></div>
<svg class="b" style="left:12px;top:93.69999999999999px" width="14" height="13" viewBox="0 0 14 13"><rect x="0.7" y="0.7" width="12.6" height="11.6" fill="#fff" stroke="#5a5a5a" stroke-width="1.2"/></svg>
<svg class="b" style="left:52px;top:93.69999999999999px" width="14" height="13" viewBox="0 0 14 13"><rect x="0.75" y="0.75" width="12.5" height="11.5" fill="#fff" stroke="#555" stroke-width="1.4"/><path d="M3 6.3 L5.7 9.3 L11 2.8" fill="none" stroke="#111" stroke-width="2.1"/></svg>
<svg class="b" style="left:84px;top:93.5px" width="15" height="15" viewBox="0 0 15 15"><rect x="1" y="1" width="12.8" height="12.8" rx="2.4" fill="none" stroke="#111" stroke-width="1.5"/><path d="M3.8 7.3 L6.4 9.9 L11.2 4.3" fill="none" stroke="#111" stroke-width="1.4"/></svg>
<div class="t" style="left:135.2px;top:97.68px;font-size:11.6px;line-height:11.6px;color:#2b6cb8;text-decoration:underline;text-underline-offset:1.5px;letter-spacing:0.427px;">2111073</div>
<div class="t" style="left:191.0px;top:97.68px;font-size:11.6px;line-height:11.6px;color:#2b6cb8;text-decoration:underline;text-underline-offset:1.5px;letter-spacing:0.073px;">4034451902947</div>
<div class="t" style="left:285.5px;top:95.98px;font-size:11.6px;line-height:11.6px;color:#111;letter-spacing:0.045px;">Scharnberger + Hasenbein</div>
<div class="t" style="left:432.5px;top:95.98px;font-size:11.6px;line-height:11.6px;color:#111">18</div>
<div class="t" style="left:514.5px;top:95.98px;font-size:11.6px;line-height:11.6px;color:#111">2160</div>
<div class="t" style="left:611.5px;top:95.98px;font-size:11.6px;line-height:11.6px;color:#111">4000</div>
<div class="t" style="left:729.5px;top:95.98px;font-size:11.6px;line-height:11.6px;color:#111">1280</div>
<div class="t" style="left:807.5px;top:95.98px;font-size:11.6px;line-height:11.6px;color:#111">220-240</div>
<div class="t" style="left:923.5px;top:95.98px;font-size:11.6px;line-height:11.6px;color:#111">IP65</div>
<div class="t" style="left:1011.0px;top:95.98px;font-size:11.6px;line-height:11.6px;color:#111">nein</div>
<div class="t" style="left:1074.0px;top:95.98px;font-size:11.6px;line-height:11.6px;color:#111">120</div>
<div class="b" style="left:0.0px;top:115.0px;width:281.0px;height:22.0px;background:#f6f6f6"></div>
<div class="b" style="left:0.0px;top:137.0px;width:1231.0px;height:1.0px;background:#e3e3e3"></div>
<div class="b" style="left:39.0px;top:114.0px;width:1.0px;height:23.0px;background:#e3e3e3"></div>
<div class="b" style="left:79.0px;top:114.0px;width:1.0px;height:23.0px;background:#e3e3e3"></div>
<div class="b" style="left:129.0px;top:114.0px;width:1.0px;height:23.0px;background:#e3e3e3"></div>
<div class="b" style="left:185.0px;top:114.0px;width:1.0px;height:23.0px;background:#e3e3e3"></div>
<div class="b" style="left:281.0px;top:114.0px;width:1.0px;height:23.0px;background:#e3e3e3"></div>
<div class="b" style="left:282.5px;top:116.0px;width:144.0px;height:20.0px;background:#d4ebd9"></div>
<div class="b" style="left:281.0px;top:114.0px;width:1.0px;height:23.0px;background:#ece4e4"></div>
<div class="b" style="left:429.5px;top:116.0px;width:79.0px;height:20.0px;background:#d4ebd9"></div>
<div class="b" style="left:428.0px;top:114.0px;width:1.0px;height:23.0px;background:#ece4e4"></div>
<div class="b" style="left:511.5px;top:116.0px;width:94.0px;height:20.0px;background:#d4ebd9"></div>
<div class="b" style="left:510.0px;top:114.0px;width:1.0px;height:23.0px;background:#ece4e4"></div>
<div class="b" style="left:608.5px;top:116.0px;width:115.0px;height:20.0px;background:#d4ebd9"></div>
<div class="b" style="left:607.0px;top:114.0px;width:1.0px;height:23.0px;background:#ece4e4"></div>
<div class="b" style="left:726.5px;top:116.0px;width:75.0px;height:20.0px;background:#d4ebd9"></div>
<div class="b" style="left:725.0px;top:114.0px;width:1.0px;height:23.0px;background:#ece4e4"></div>
<div class="b" style="left:804.5px;top:116.0px;width:113.0px;height:20.0px;background:#d4ebd9"></div>
<div class="b" style="left:803.0px;top:114.0px;width:1.0px;height:23.0px;background:#ece4e4"></div>
<div class="b" style="left:920.5px;top:116.0px;width:84.5px;height:20.0px;background:#d4ebd9"></div>
<div class="b" style="left:919.0px;top:114.0px;width:1.0px;height:23.0px;background:#ece4e4"></div>
<div class="b" style="left:1008.0px;top:116.0px;width:60.0px;height:20.0px;background:#d4ebd9"></div>
<div class="b" style="left:1006.5px;top:114.0px;width:1.0px;height:23.0px;background:#ece4e4"></div>
<div class="b" style="left:1071.0px;top:116.0px;width:160.0px;height:20.0px;background:#d4ebd9"></div>
<div class="b" style="left:1069.5px;top:114.0px;width:1.0px;height:23.0px;background:#ece4e4"></div>
<svg class="b" style="left:12px;top:116.69999999999999px" width="14" height="13" viewBox="0 0 14 13"><rect x="0.7" y="0.7" width="12.6" height="11.6" fill="#fff" stroke="#5a5a5a" stroke-width="1.2"/></svg>
<svg class="b" style="left:52px;top:116.69999999999999px" width="14" height="13" viewBox="0 0 14 13"><rect x="0.75" y="0.75" width="12.5" height="11.5" fill="#fff" stroke="#555" stroke-width="1.4"/><path d="M3 6.3 L5.7 9.3 L11 2.8" fill="none" stroke="#111" stroke-width="2.1"/></svg>
<svg class="b" style="left:84px;top:116.5px" width="15" height="15" viewBox="0 0 15 15"><rect x="1" y="1" width="12.8" height="12.8" rx="2.4" fill="none" stroke="#111" stroke-width="1.5"/><path d="M3.8 7.3 L6.4 9.9 L11.2 4.3" fill="none" stroke="#111" stroke-width="1.4"/></svg>
<div class="t" style="left:135.2px;top:120.68px;font-size:11.6px;line-height:11.6px;color:#2b6cb8;text-decoration:underline;text-underline-offset:1.5px;letter-spacing:0.427px;">2111075</div>
<div class="t" style="left:191.0px;top:120.68px;font-size:11.6px;line-height:11.6px;color:#2b6cb8;text-decoration:underline;text-underline-offset:1.5px;letter-spacing:0.073px;">4034451903081</div>
<div class="t" style="left:285.5px;top:118.98px;font-size:11.6px;line-height:11.6px;color:#111;letter-spacing:0.045px;">Scharnberger + Hasenbein</div>
<div class="t" style="left:432.5px;top:118.98px;font-size:11.6px;line-height:11.6px;color:#111">54</div>
<div class="t" style="left:514.5px;top:118.98px;font-size:11.6px;line-height:11.6px;color:#111">7290</div>
<div class="t" style="left:611.5px;top:118.98px;font-size:11.6px;line-height:11.6px;color:#111">5000</div>
<div class="t" style="left:729.5px;top:118.98px;font-size:11.6px;line-height:11.6px;color:#111">1560</div>
<div class="t" style="left:807.5px;top:118.98px;font-size:11.6px;line-height:11.6px;color:#111">220-240</div>
<div class="t" style="left:923.5px;top:118.98px;font-size:11.6px;line-height:11.6px;color:#111">IP65</div>
<div class="t" style="left:1011.0px;top:118.98px;font-size:11.6px;line-height:11.6px;color:#111">nein</div>
<div class="t" style="left:1074.0px;top:118.98px;font-size:11.6px;line-height:11.6px;color:#111">135</div>
<div class="b" style="left:0.0px;top:160.0px;width:1231.0px;height:1.0px;background:#e3e3e3"></div>
<div class="b" style="left:39.0px;top:137.0px;width:1.0px;height:23.0px;background:#e3e3e3"></div>
<div class="b" style="left:79.0px;top:137.0px;width:1.0px;height:23.0px;background:#e3e3e3"></div>
<div class="b" style="left:129.0px;top:137.0px;width:1.0px;height:23.0px;background:#e3e3e3"></div>
<div class="b" style="left:185.0px;top:137.0px;width:1.0px;height:23.0px;background:#e3e3e3"></div>
<div class="b" style="left:281.0px;top:137.0px;width:1.0px;height:23.0px;background:#e3e3e3"></div>
<div class="b" style="left:282.5px;top:139.0px;width:144.0px;height:20.0px;background:#d4ebd9"></div>
<div class="b" style="left:281.0px;top:137.0px;width:1.0px;height:23.0px;background:#ece4e4"></div>
<div class="b" style="left:429.5px;top:139.0px;width:79.0px;height:20.0px;background:#d4ebd9"></div>
<div class="b" style="left:428.0px;top:137.0px;width:1.0px;height:23.0px;background:#ece4e4"></div>
<div class="b" style="left:511.5px;top:139.0px;width:94.0px;height:20.0px;background:#d4ebd9"></div>
<div class="b" style="left:510.0px;top:137.0px;width:1.0px;height:23.0px;background:#ece4e4"></div>
<div class="b" style="left:608.5px;top:139.0px;width:115.0px;height:20.0px;background:#d4ebd9"></div>
<div class="b" style="left:607.0px;top:137.0px;width:1.0px;height:23.0px;background:#ece4e4"></div>
<div class="b" style="left:726.5px;top:139.0px;width:75.0px;height:20.0px;background:#d4ebd9"></div>
<div class="b" style="left:725.0px;top:137.0px;width:1.0px;height:23.0px;background:#ece4e4"></div>
<div class="b" style="left:804.5px;top:139.0px;width:113.0px;height:20.0px;background:#d4ebd9"></div>
<div class="b" style="left:803.0px;top:137.0px;width:1.0px;height:23.0px;background:#ece4e4"></div>
<div class="b" style="left:920.5px;top:139.0px;width:84.5px;height:20.0px;background:#d4ebd9"></div>
<div class="b" style="left:919.0px;top:137.0px;width:1.0px;height:23.0px;background:#ece4e4"></div>
<div class="b" style="left:1008.0px;top:139.0px;width:60.0px;height:20.0px;background:#d4ebd9"></div>
<div class="b" style="left:1006.5px;top:137.0px;width:1.0px;height:23.0px;background:#ece4e4"></div>
<div class="b" style="left:1071.0px;top:139.0px;width:160.0px;height:20.0px;background:#d4ebd9"></div>
<div class="b" style="left:1069.5px;top:137.0px;width:1.0px;height:23.0px;background:#ece4e4"></div>
<svg class="b" style="left:12px;top:139.7px" width="14" height="13" viewBox="0 0 14 13"><rect x="0.7" y="0.7" width="12.6" height="11.6" fill="#fff" stroke="#5a5a5a" stroke-width="1.2"/></svg>
<svg class="b" style="left:52px;top:139.7px" width="14" height="13" viewBox="0 0 14 13"><rect x="0.75" y="0.75" width="12.5" height="11.5" fill="#fff" stroke="#555" stroke-width="1.4"/><path d="M3 6.3 L5.7 9.3 L11 2.8" fill="none" stroke="#111" stroke-width="2.1"/></svg>
<svg class="b" style="left:84px;top:139.5px" width="15" height="15" viewBox="0 0 15 15"><rect x="1" y="1" width="12.8" height="12.8" rx="2.4" fill="none" stroke="#111" stroke-width="1.5"/><path d="M3.8 7.3 L6.4 9.9 L11.2 4.3" fill="none" stroke="#111" stroke-width="1.4"/></svg>
<div class="t" style="left:135.2px;top:143.68px;font-size:11.6px;line-height:11.6px;color:#2b6cb8;text-decoration:underline;text-underline-offset:1.5px;letter-spacing:0.427px;">2111078</div>
<div class="t" style="left:191.0px;top:143.68px;font-size:11.6px;line-height:11.6px;color:#2b6cb8;text-decoration:underline;text-underline-offset:1.5px;letter-spacing:0.073px;">4034451903197</div>
<div class="t" style="left:285.5px;top:141.98px;font-size:11.6px;line-height:11.6px;color:#111;letter-spacing:0.045px;">Scharnberger + Hasenbein</div>
<div class="t" style="left:432.5px;top:141.98px;font-size:11.6px;line-height:11.6px;color:#111">36</div>
<div class="t" style="left:514.5px;top:141.98px;font-size:11.6px;line-height:11.6px;color:#111">4860</div>
<div class="t" style="left:611.5px;top:141.98px;font-size:11.6px;line-height:11.6px;color:#111">5000</div>
<div class="t" style="left:729.5px;top:141.98px;font-size:11.6px;line-height:11.6px;color:#111">1220</div>
<div class="t" style="left:807.5px;top:141.98px;font-size:11.6px;line-height:11.6px;color:#111">220-240</div>
<div class="t" style="left:923.5px;top:141.98px;font-size:11.6px;line-height:11.6px;color:#111">IP65</div>
<div class="t" style="left:1011.0px;top:141.98px;font-size:11.6px;line-height:11.6px;color:#111">nein</div>
<div class="t" style="left:1074.0px;top:141.98px;font-size:11.6px;line-height:11.6px;color:#111">135</div>
<div class="b" style="left:0.0px;top:161.0px;width:281.0px;height:22.0px;background:#f6f6f6"></div>
<div class="b" style="left:0.0px;top:183.0px;width:1231.0px;height:1.0px;background:#e3e3e3"></div>
<div class="b" style="left:39.0px;top:160.0px;width:1.0px;height:23.0px;background:#e3e3e3"></div>
<div class="b" style="left:79.0px;top:160.0px;width:1.0px;height:23.0px;background:#e3e3e3"></div>
<div class="b" style="left:129.0px;top:160.0px;width:1.0px;height:23.0px;background:#e3e3e3"></div>
<div class="b" style="left:185.0px;top:160.0px;width:1.0px;height:23.0px;background:#e3e3e3"></div>
<div class="b" style="left:281.0px;top:160.0px;width:1.0px;height:23.0px;background:#e3e3e3"></div>
<div class="b" style="left:282.5px;top:162.0px;width:144.0px;height:20.0px;background:#d4ebd9"></div>
<div class="b" style="left:281.0px;top:160.0px;width:1.0px;height:23.0px;background:#ece4e4"></div>
<div class="b" style="left:429.5px;top:162.0px;width:79.0px;height:20.0px;background:#d4ebd9"></div>
<div class="b" style="left:428.0px;top:160.0px;width:1.0px;height:23.0px;background:#ece4e4"></div>
<div class="b" style="left:511.5px;top:162.0px;width:94.0px;height:20.0px;background:#d4ebd9"></div>
<div class="b" style="left:510.0px;top:160.0px;width:1.0px;height:23.0px;background:#ece4e4"></div>
<div class="b" style="left:608.5px;top:162.0px;width:115.0px;height:20.0px;background:#d4ebd9"></div>
<div class="b" style="left:607.0px;top:160.0px;width:1.0px;height:23.0px;background:#ece4e4"></div>
<div class="b" style="left:726.5px;top:162.0px;width:75.0px;height:20.0px;background:#d4ebd9"></div>
<div class="b" style="left:725.0px;top:160.0px;width:1.0px;height:23.0px;background:#ece4e4"></div>
<div class="b" style="left:804.5px;top:162.0px;width:113.0px;height:20.0px;background:#d4ebd9"></div>
<div class="b" style="left:803.0px;top:160.0px;width:1.0px;height:23.0px;background:#ece4e4"></div>
<div class="b" style="left:920.5px;top:162.0px;width:84.5px;height:20.0px;background:#d4ebd9"></div>
<div class="b" style="left:919.0px;top:160.0px;width:1.0px;height:23.0px;background:#ece4e4"></div>
<div class="b" style="left:1008.0px;top:162.0px;width:60.0px;height:20.0px;background:#d4ebd9"></div>
<div class="b" style="left:1006.5px;top:160.0px;width:1.0px;height:23.0px;background:#ece4e4"></div>
<div class="b" style="left:1071.0px;top:162.0px;width:160.0px;height:20.0px;background:#d4ebd9"></div>
<div class="b" style="left:1069.5px;top:160.0px;width:1.0px;height:23.0px;background:#ece4e4"></div>
<svg class="b" style="left:12px;top:162.7px" width="14" height="13" viewBox="0 0 14 13"><rect x="0.7" y="0.7" width="12.6" height="11.6" fill="#fff" stroke="#5a5a5a" stroke-width="1.2"/></svg>
<svg class="b" style="left:52px;top:162.7px" width="14" height="13" viewBox="0 0 14 13"><rect x="0.75" y="0.75" width="12.5" height="11.5" fill="#fff" stroke="#555" stroke-width="1.4"/><path d="M3 6.3 L5.7 9.3 L11 2.8" fill="none" stroke="#111" stroke-width="2.1"/></svg>
<svg class="b" style="left:84.5px;top:165px" width="14" height="12" viewBox="0 0 14 12"><path d="M7 1 L13 11.2 L1 11.2 Z" fill="none" stroke="#111" stroke-width="1.2" stroke-linejoin="round"/><path d="M7 4.5 V8.3" stroke="#111" stroke-width="1.1"/><circle cx="7" cy="9.6" r="0.6" fill="#111"/></svg>
<div class="t" style="left:135.2px;top:166.68px;font-size:11.6px;line-height:11.6px;color:#2b6cb8;text-decoration:underline;text-underline-offset:1.5px;letter-spacing:0.140px;">2500343</div>
<div class="t" style="left:191.0px;top:166.68px;font-size:11.6px;line-height:11.6px;color:#2b6cb8;text-decoration:underline;text-underline-offset:1.5px;letter-spacing:0.073px;">4034451386501</div>
<div class="t" style="left:285.5px;top:164.98px;font-size:11.6px;line-height:11.6px;color:#111;letter-spacing:0.045px;">Scharnberger + Hasenbein</div>
<div class="t" style="left:432.5px;top:164.98px;font-size:11.6px;line-height:11.6px;color:#111">3,5</div>
<div class="t" style="left:514.5px;top:164.98px;font-size:11.6px;line-height:11.6px;color:#111">200</div>
<div class="t" style="left:611.5px;top:164.98px;font-size:11.6px;line-height:11.6px;color:#111">3000</div>
<div class="t" style="left:729.5px;top:164.98px;font-size:11.6px;line-height:11.6px;color:#111">250</div>
<div class="t" style="left:807.5px;top:164.98px;font-size:11.6px;line-height:11.6px;color:#111">12-14</div>
<div class="t" style="left:923.5px;top:164.98px;font-size:11.6px;line-height:11.6px;color:#111">IP20</div>
<div class="t" style="left:1011.0px;top:164.98px;font-size:11.6px;line-height:11.6px;color:#111">ja</div>
<div class="b" style="left:0.0px;top:206.0px;width:1231.0px;height:1.0px;background:#e3e3e3"></div>
<div class="b" style="left:39.0px;top:183.0px;width:1.0px;height:23.0px;background:#e3e3e3"></div>
<div class="b" style="left:79.0px;top:183.0px;width:1.0px;height:23.0px;background:#e3e3e3"></div>
<div class="b" style="left:129.0px;top:183.0px;width:1.0px;height:23.0px;background:#e3e3e3"></div>
<div class="b" style="left:185.0px;top:183.0px;width:1.0px;height:23.0px;background:#e3e3e3"></div>
<div class="b" style="left:281.0px;top:183.0px;width:1.0px;height:23.0px;background:#e3e3e3"></div>
<div class="b" style="left:282.5px;top:185.0px;width:144.0px;height:20.0px;background:#d4ebd9"></div>
<div class="b" style="left:281.0px;top:183.0px;width:1.0px;height:23.0px;background:#ece4e4"></div>
<div class="b" style="left:429.5px;top:185.0px;width:79.0px;height:20.0px;background:#d4ebd9"></div>
<div class="b" style="left:428.0px;top:183.0px;width:1.0px;height:23.0px;background:#ece4e4"></div>
<div class="b" style="left:511.5px;top:185.0px;width:94.0px;height:20.0px;background:#d4ebd9"></div>
<div class="b" style="left:510.0px;top:183.0px;width:1.0px;height:23.0px;background:#ece4e4"></div>
<div class="b" style="left:608.5px;top:185.0px;width:115.0px;height:20.0px;background:#d4ebd9"></div>
<div class="b" style="left:607.0px;top:183.0px;width:1.0px;height:23.0px;background:#ece4e4"></div>
<div class="b" style="left:726.5px;top:185.0px;width:75.0px;height:20.0px;background:#d4ebd9"></div>
<div class="b" style="left:725.0px;top:183.0px;width:1.0px;height:23.0px;background:#ece4e4"></div>
<div class="b" style="left:804.5px;top:185.0px;width:113.0px;height:20.0px;background:#d4ebd9"></div>
<div class="b" style="left:803.0px;top:183.0px;width:1.0px;height:23.0px;background:#ece4e4"></div>
<div class="b" style="left:920.5px;top:185.0px;width:84.5px;height:20.0px;background:#d4ebd9"></div>
<div class="b" style="left:919.0px;top:183.0px;width:1.0px;height:23.0px;background:#ece4e4"></div>
<div class="b" style="left:1008.0px;top:185.0px;width:60.0px;height:20.0px;background:#d4ebd9"></div>
<div class="b" style="left:1006.5px;top:183.0px;width:1.0px;height:23.0px;background:#ece4e4"></div>
<div class="b" style="left:1071.0px;top:185.0px;width:160.0px;height:20.0px;background:#d4ebd9"></div>
<div class="b" style="left:1069.5px;top:183.0px;width:1.0px;height:23.0px;background:#ece4e4"></div>
<svg class="b" style="left:12px;top:185.7px" width="14" height="13" viewBox="0 0 14 13"><rect x="0.7" y="0.7" width="12.6" height="11.6" fill="#fff" stroke="#5a5a5a" stroke-width="1.2"/></svg>
<svg class="b" style="left:52px;top:185.7px" width="14" height="13" viewBox="0 0 14 13"><rect x="0.75" y="0.75" width="12.5" height="11.5" fill="#fff" stroke="#555" stroke-width="1.4"/><path d="M3 6.3 L5.7 9.3 L11 2.8" fill="none" stroke="#111" stroke-width="2.1"/></svg>
<svg class="b" style="left:84.5px;top:188px" width="14" height="12" viewBox="0 0 14 12"><path d="M7 1 L13 11.2 L1 11.2 Z" fill="none" stroke="#111" stroke-width="1.2" stroke-linejoin="round"/><path d="M7 4.5 V8.3" stroke="#111" stroke-width="1.1"/><circle cx="7" cy="9.6" r="0.6" fill="#111"/></svg>
<div class="t" style="left:135.2px;top:189.68px;font-size:11.6px;line-height:11.6px;color:#2b6cb8;text-decoration:underline;text-underline-offset:1.5px;letter-spacing:0.140px;">2500344</div>
<div class="t" style="left:191.0px;top:189.68px;font-size:11.6px;line-height:11.6px;color:#2b6cb8;text-decoration:underline;text-underline-offset:1.5px;letter-spacing:0.073px;">4034451386525</div>
<div class="t" style="left:285.5px;top:187.98px;font-size:11.6px;line-height:11.6px;color:#111;letter-spacing:0.045px;">Scharnberger + Hasenbein</div>
<div class="t" style="left:432.5px;top:187.98px;font-size:11.6px;line-height:11.6px;color:#111">11</div>
<div class="t" style="left:514.5px;top:187.98px;font-size:11.6px;line-height:11.6px;color:#111">600</div>
<div class="t" style="left:611.5px;top:187.98px;font-size:11.6px;line-height:11.6px;color:#111">3000</div>
<div class="t" style="left:729.5px;top:187.98px;font-size:11.6px;line-height:11.6px;color:#111">600</div>
<div class="t" style="left:807.5px;top:187.98px;font-size:11.6px;line-height:11.6px;color:#111">12-14</div>
<div class="t" style="left:923.5px;top:187.98px;font-size:11.6px;line-height:11.6px;color:#111">IP20</div>
<div class="t" style="left:1011.0px;top:187.98px;font-size:11.6px;line-height:11.6px;color:#111">ja</div>
<div class="b" style="left:0.0px;top:207.0px;width:281.0px;height:22.0px;background:#f6f6f6"></div>
<div class="b" style="left:0.0px;top:229.0px;width:1231.0px;height:1.0px;background:#e3e3e3"></div>
<div class="b" style="left:39.0px;top:206.0px;width:1.0px;height:23.0px;background:#e3e3e3"></div>
<div class="b" style="left:79.0px;top:206.0px;width:1.0px;height:23.0px;background:#e3e3e3"></div>
<div class="b" style="left:129.0px;top:206.0px;width:1.0px;height:23.0px;background:#e3e3e3"></div>
<div class="b" style="left:185.0px;top:206.0px;width:1.0px;height:23.0px;background:#e3e3e3"></div>
<div class="b" style="left:281.0px;top:206.0px;width:1.0px;height:23.0px;background:#e3e3e3"></div>
<div class="b" style="left:282.5px;top:208.0px;width:144.0px;height:20.0px;background:#d4ebd9"></div>
<div class="b" style="left:281.0px;top:206.0px;width:1.0px;height:23.0px;background:#ece4e4"></div>
<div class="b" style="left:429.5px;top:208.0px;width:79.0px;height:20.0px;background:#d4ebd9"></div>
<div class="b" style="left:428.0px;top:206.0px;width:1.0px;height:23.0px;background:#ece4e4"></div>
<div class="b" style="left:511.5px;top:208.0px;width:94.0px;height:20.0px;background:#d4ebd9"></div>
<div class="b" style="left:510.0px;top:206.0px;width:1.0px;height:23.0px;background:#ece4e4"></div>
<div class="b" style="left:608.5px;top:208.0px;width:115.0px;height:20.0px;background:#d4ebd9"></div>
<div class="b" style="left:607.0px;top:206.0px;width:1.0px;height:23.0px;background:#ece4e4"></div>
<div class="b" style="left:726.5px;top:208.0px;width:75.0px;height:20.0px;background:#d4ebd9"></div>
<div class="b" style="left:725.0px;top:206.0px;width:1.0px;height:23.0px;background:#ece4e4"></div>
<div class="b" style="left:804.5px;top:208.0px;width:113.0px;height:20.0px;background:#d4ebd9"></div>
<div class="b" style="left:803.0px;top:206.0px;width:1.0px;height:23.0px;background:#ece4e4"></div>
<div class="b" style="left:920.5px;top:208.0px;width:84.5px;height:20.0px;background:#d4ebd9"></div>
<div class="b" style="left:919.0px;top:206.0px;width:1.0px;height:23.0px;background:#ece4e4"></div>
<div class="b" style="left:1008.0px;top:208.0px;width:60.0px;height:20.0px;background:#d4ebd9"></div>
<div class="b" style="left:1006.5px;top:206.0px;width:1.0px;height:23.0px;background:#ece4e4"></div>
<div class="b" style="left:1071.0px;top:208.0px;width:160.0px;height:20.0px;background:#d4ebd9"></div>
<div class="b" style="left:1069.5px;top:206.0px;width:1.0px;height:23.0px;background:#ece4e4"></div>
<svg class="b" style="left:12px;top:208.7px" width="14" height="13" viewBox="0 0 14 13"><rect x="0.7" y="0.7" width="12.6" height="11.6" fill="#fff" stroke="#5a5a5a" stroke-width="1.2"/></svg>
<svg class="b" style="left:52px;top:208.7px" width="14" height="13" viewBox="0 0 14 13"><rect x="0.75" y="0.75" width="12.5" height="11.5" fill="#fff" stroke="#555" stroke-width="1.4"/><path d="M3 6.3 L5.7 9.3 L11 2.8" fill="none" stroke="#111" stroke-width="2.1"/></svg>
<svg class="b" style="left:84px;top:208.5px" width="15" height="15" viewBox="0 0 15 15"><rect x="1" y="1" width="12.8" height="12.8" rx="2.4" fill="none" stroke="#111" stroke-width="1.5"/><path d="M3.8 7.3 L6.4 9.9 L11.2 4.3" fill="none" stroke="#111" stroke-width="1.4"/></svg>
<div class="t" style="left:135.2px;top:212.68px;font-size:11.6px;line-height:11.6px;color:#2b6cb8;text-decoration:underline;text-underline-offset:1.5px;letter-spacing:0.140px;">2500345</div>
<div class="t" style="left:191.0px;top:212.68px;font-size:11.6px;line-height:11.6px;color:#2b6cb8;text-decoration:underline;text-underline-offset:1.5px;letter-spacing:0.073px;">4034451386549</div>
<div class="t" style="left:285.5px;top:210.98px;font-size:11.6px;line-height:11.6px;color:#111;letter-spacing:0.045px;">Scharnberger + Hasenbein</div>
<div class="t" style="left:432.5px;top:210.98px;font-size:11.6px;line-height:11.6px;color:#111">18</div>
<div class="t" style="left:514.5px;top:210.98px;font-size:11.6px;line-height:11.6px;color:#111">1000</div>
<div class="t" style="left:611.5px;top:210.98px;font-size:11.6px;line-height:11.6px;color:#111">3000</div>
<div class="t" style="left:729.5px;top:210.98px;font-size:11.6px;line-height:11.6px;color:#111">1000</div>
<div class="t" style="left:807.5px;top:210.98px;font-size:11.6px;line-height:11.6px;color:#111">12-14</div>
<div class="t" style="left:923.5px;top:210.98px;font-size:11.6px;line-height:11.6px;color:#111">IP20</div>
<div class="t" style="left:1011.0px;top:210.98px;font-size:11.6px;line-height:11.6px;color:#111">ja</div>
<div class="t" style="left:1074.0px;top:210.98px;font-size:11.6px;line-height:11.6px;color:#111">55</div>
<div class="b" style="left:0.0px;top:252.0px;width:1231.0px;height:1.0px;background:#e3e3e3"></div>
<div class="b" style="left:39.0px;top:229.0px;width:1.0px;height:23.0px;background:#e3e3e3"></div>
<div class="b" style="left:79.0px;top:229.0px;width:1.0px;height:23.0px;background:#e3e3e3"></div>
<div class="b" style="left:129.0px;top:229.0px;width:1.0px;height:23.0px;background:#e3e3e3"></div>
<div class="b" style="left:185.0px;top:229.0px;width:1.0px;height:23.0px;background:#e3e3e3"></div>
<div class="b" style="left:281.0px;top:229.0px;width:1.0px;height:23.0px;background:#e3e3e3"></div>
<div class="b" style="left:282.5px;top:231.0px;width:144.0px;height:20.0px;background:#d4ebd9"></div>
<div class="b" style="left:281.0px;top:229.0px;width:1.0px;height:23.0px;background:#ece4e4"></div>
<div class="b" style="left:429.5px;top:231.0px;width:79.0px;height:20.0px;background:#d4ebd9"></div>
<div class="b" style="left:428.0px;top:229.0px;width:1.0px;height:23.0px;background:#ece4e4"></div>
<div class="b" style="left:511.5px;top:231.0px;width:94.0px;height:20.0px;background:#d4ebd9"></div>
<div class="b" style="left:510.0px;top:229.0px;width:1.0px;height:23.0px;background:#ece4e4"></div>
<div class="b" style="left:608.5px;top:231.0px;width:115.0px;height:20.0px;background:#d4ebd9"></div>
<div class="b" style="left:607.0px;top:229.0px;width:1.0px;height:23.0px;background:#ece4e4"></div>
<div class="b" style="left:726.5px;top:231.0px;width:75.0px;height:20.0px;background:#d4ebd9"></div>
<div class="b" style="left:725.0px;top:229.0px;width:1.0px;height:23.0px;background:#ece4e4"></div>
<div class="b" style="left:804.5px;top:231.0px;width:113.0px;height:20.0px;background:#d4ebd9"></div>
<div class="b" style="left:803.0px;top:229.0px;width:1.0px;height:23.0px;background:#ece4e4"></div>
<div class="b" style="left:920.5px;top:231.0px;width:84.5px;height:20.0px;background:#d4ebd9"></div>
<div class="b" style="left:919.0px;top:229.0px;width:1.0px;height:23.0px;background:#ece4e4"></div>
<div class="b" style="left:1008.0px;top:231.0px;width:60.0px;height:20.0px;background:#d4ebd9"></div>
<div class="b" style="left:1006.5px;top:229.0px;width:1.0px;height:23.0px;background:#ece4e4"></div>
<div class="b" style="left:1071.0px;top:231.0px;width:160.0px;height:20.0px;background:#d4ebd9"></div>
<div class="b" style="left:1069.5px;top:229.0px;width:1.0px;height:23.0px;background:#ece4e4"></div>
<svg class="b" style="left:12px;top:231.7px" width="14" height="13" viewBox="0 0 14 13"><rect x="0.7" y="0.7" width="12.6" height="11.6" fill="#fff" stroke="#5a5a5a" stroke-width="1.2"/></svg>
<svg class="b" style="left:52px;top:231.7px" width="14" height="13" viewBox="0 0 14 13"><rect x="0.75" y="0.75" width="12.5" height="11.5" fill="#fff" stroke="#555" stroke-width="1.4"/><path d="M3 6.3 L5.7 9.3 L11 2.8" fill="none" stroke="#111" stroke-width="2.1"/></svg>
<svg class="b" style="left:84px;top:231.5px" width="15" height="15" viewBox="0 0 15 15"><rect x="1" y="1" width="12.8" height="12.8" rx="2.4" fill="none" stroke="#111" stroke-width="1.5"/><path d="M3.8 7.3 L6.4 9.9 L11.2 4.3" fill="none" stroke="#111" stroke-width="1.4"/></svg>
<div class="t" style="left:135.2px;top:235.68px;font-size:11.6px;line-height:11.6px;color:#2b6cb8;text-decoration:underline;text-underline-offset:1.5px;letter-spacing:0.140px;">2504462</div>
<div class="t" style="left:191.0px;top:235.68px;font-size:11.6px;line-height:11.6px;color:#2b6cb8;text-decoration:underline;text-underline-offset:1.5px;letter-spacing:0.073px;">4034451309449</div>
<div class="t" style="left:285.5px;top:233.98px;font-size:11.6px;line-height:11.6px;color:#111;letter-spacing:0.045px;">Scharnberger + Hasenbein</div>
<div class="t" style="left:432.5px;top:233.98px;font-size:11.6px;line-height:11.6px;color:#111">10</div>
<div class="t" style="left:514.5px;top:233.98px;font-size:11.6px;line-height:11.6px;color:#111">850</div>
<div class="t" style="left:611.5px;top:233.98px;font-size:11.6px;line-height:11.6px;color:#111">4000</div>
<div class="t" style="left:729.5px;top:233.98px;font-size:11.6px;line-height:11.6px;color:#111">228</div>
<div class="t" style="left:807.5px;top:233.98px;font-size:11.6px;line-height:11.6px;color:#111">100-240</div>
<div class="t" style="left:923.5px;top:233.98px;font-size:11.6px;line-height:11.6px;color:#111">IP54</div>
<div class="t" style="left:1011.0px;top:233.98px;font-size:11.6px;line-height:11.6px;color:#111">nein</div>
<div class="t" style="left:1074.0px;top:233.98px;font-size:11.6px;line-height:11.6px;color:#111">85</div>
<div class="b" style="left:0.0px;top:253.0px;width:281.0px;height:22.0px;background:#f6f6f6"></div>
<div class="b" style="left:0.0px;top:275.0px;width:1231.0px;height:1.0px;background:#e3e3e3"></div>
<div class="b" style="left:39.0px;top:252.0px;width:1.0px;height:23.0px;background:#e3e3e3"></div>
<div class="b" style="left:79.0px;top:252.0px;width:1.0px;height:23.0px;background:#e3e3e3"></div>
<div class="b" style="left:129.0px;top:252.0px;width:1.0px;height:23.0px;background:#e3e3e3"></div>
<div class="b" style="left:185.0px;top:252.0px;width:1.0px;height:23.0px;background:#e3e3e3"></div>
<div class="b" style="left:281.0px;top:252.0px;width:1.0px;height:23.0px;background:#e3e3e3"></div>
<div class="b" style="left:282.5px;top:254.0px;width:144.0px;height:20.0px;background:#d4ebd9"></div>
<div class="b" style="left:281.0px;top:252.0px;width:1.0px;height:23.0px;background:#ece4e4"></div>
<div class="b" style="left:429.5px;top:254.0px;width:79.0px;height:20.0px;background:#d4ebd9"></div>
<div class="b" style="left:428.0px;top:252.0px;width:1.0px;height:23.0px;background:#ece4e4"></div>
<div class="b" style="left:511.5px;top:254.0px;width:94.0px;height:20.0px;background:#d4ebd9"></div>
<div class="b" style="left:510.0px;top:252.0px;width:1.0px;height:23.0px;background:#ece4e4"></div>
<div class="b" style="left:608.5px;top:254.0px;width:115.0px;height:20.0px;background:#d4ebd9"></div>
<div class="b" style="left:607.0px;top:252.0px;width:1.0px;height:23.0px;background:#ece4e4"></div>
<div class="b" style="left:726.5px;top:254.0px;width:75.0px;height:20.0px;background:#d4ebd9"></div>
<div class="b" style="left:725.0px;top:252.0px;width:1.0px;height:23.0px;background:#ece4e4"></div>
<div class="b" style="left:804.5px;top:254.0px;width:113.0px;height:20.0px;background:#d4ebd9"></div>
<div class="b" style="left:803.0px;top:252.0px;width:1.0px;height:23.0px;background:#ece4e4"></div>
<div class="b" style="left:920.5px;top:254.0px;width:84.5px;height:20.0px;background:#d4ebd9"></div>
<div class="b" style="left:919.0px;top:252.0px;width:1.0px;height:23.0px;background:#ece4e4"></div>
<div class="b" style="left:1008.0px;top:254.0px;width:60.0px;height:20.0px;background:#d4ebd9"></div>
<div class="b" style="left:1006.5px;top:252.0px;width:1.0px;height:23.0px;background:#ece4e4"></div>
<div class="b" style="left:1071.0px;top:254.0px;width:160.0px;height:20.0px;background:#d4ebd9"></div>
<div class="b" style="left:1069.5px;top:252.0px;width:1.0px;height:23.0px;background:#ece4e4"></div>
<svg class="b" style="left:12px;top:254.7px" width="14" height="13" viewBox="0 0 14 13"><rect x="0.7" y="0.7" width="12.6" height="11.6" fill="#fff" stroke="#5a5a5a" stroke-width="1.2"/></svg>
<svg class="b" style="left:52px;top:254.7px" width="14" height="13" viewBox="0 0 14 13"><rect x="0.75" y="0.75" width="12.5" height="11.5" fill="#fff" stroke="#555" stroke-width="1.4"/><path d="M3 6.3 L5.7 9.3 L11 2.8" fill="none" stroke="#111" stroke-width="2.1"/></svg>
<svg class="b" style="left:84.5px;top:257px" width="14" height="12" viewBox="0 0 14 12"><path d="M7 1 L13 11.2 L1 11.2 Z" fill="none" stroke="#111" stroke-width="1.2" stroke-linejoin="round"/><path d="M7 4.5 V8.3" stroke="#111" stroke-width="1.1"/><circle cx="7" cy="9.6" r="0.6" fill="#111"/></svg>
<div class="t" style="left:135.2px;top:258.68px;font-size:11.6px;line-height:11.6px;color:#2b6cb8;text-decoration:underline;text-underline-offset:1.5px;letter-spacing:0.140px;">2508468</div>
<div class="t" style="left:191.0px;top:258.68px;font-size:11.6px;line-height:11.6px;color:#2b6cb8;text-decoration:underline;text-underline-offset:1.5px;letter-spacing:0.073px;">4034451300859</div>
<div class="t" style="left:285.5px;top:256.98px;font-size:11.6px;line-height:11.6px;color:#111;letter-spacing:0.045px;">Scharnberger + Hasenbein</div>
<div class="t" style="left:729.5px;top:256.98px;font-size:11.6px;line-height:11.6px;color:#111">1262</div>
<div class="t" style="left:807.5px;top:256.98px;font-size:11.6px;line-height:11.6px;color:#111">230</div>
<div class="t" style="left:923.5px;top:256.98px;font-size:11.6px;line-height:11.6px;color:#111">IP55</div>
<div class="t" style="left:1011.0px;top:256.98px;font-size:11.6px;line-height:11.6px;color:#111">nein</div>
<div class="b" style="left:0.0px;top:298.0px;width:1231.0px;height:1.0px;background:#e3e3e3"></div>
<div class="b" style="left:39.0px;top:275.0px;width:1.0px;height:23.0px;background:#e3e3e3"></div>
<div class="b" style="left:79.0px;top:275.0px;width:1.0px;height:23.0px;background:#e3e3e3"></div>
<div class="b" style="left:129.0px;top:275.0px;width:1.0px;height:23.0px;background:#e3e3e3"></div>
<div class="b" style="left:185.0px;top:275.0px;width:1.0px;height:23.0px;background:#e3e3e3"></div>
<div class="b" style="left:281.0px;top:275.0px;width:1.0px;height:23.0px;background:#e3e3e3"></div>
<div class="b" style="left:282.5px;top:277.0px;width:144.0px;height:20.0px;background:#d4ebd9"></div>
<div class="b" style="left:281.0px;top:275.0px;width:1.0px;height:23.0px;background:#ece4e4"></div>
<div class="b" style="left:429.5px;top:277.0px;width:79.0px;height:20.0px;background:#d4ebd9"></div>
<div class="b" style="left:428.0px;top:275.0px;width:1.0px;height:23.0px;background:#ece4e4"></div>
<div class="b" style="left:511.5px;top:277.0px;width:94.0px;height:20.0px;background:#d4ebd9"></div>
<div class="b" style="left:510.0px;top:275.0px;width:1.0px;height:23.0px;background:#ece4e4"></div>
<div class="b" style="left:608.5px;top:277.0px;width:115.0px;height:20.0px;background:#d4ebd9"></div>
<div class="b" style="left:607.0px;top:275.0px;width:1.0px;height:23.0px;background:#ece4e4"></div>
<div class="b" style="left:726.5px;top:277.0px;width:75.0px;height:20.0px;background:#d4ebd9"></div>
<div class="b" style="left:725.0px;top:275.0px;width:1.0px;height:23.0px;background:#ece4e4"></div>
<div class="b" style="left:804.5px;top:277.0px;width:113.0px;height:20.0px;background:#d4ebd9"></div>
<div class="b" style="left:803.0px;top:275.0px;width:1.0px;height:23.0px;background:#ece4e4"></div>
<div class="b" style="left:920.5px;top:277.0px;width:84.5px;height:20.0px;background:#d4ebd9"></div>
<div class="b" style="left:919.0px;top:275.0px;width:1.0px;height:23.0px;background:#ece4e4"></div>
<div class="b" style="left:1008.0px;top:277.0px;width:60.0px;height:20.0px;background:#d4ebd9"></div>
<div class="b" style="left:1006.5px;top:275.0px;width:1.0px;height:23.0px;background:#ece4e4"></div>
<div class="b" style="left:1071.0px;top:277.0px;width:160.0px;height:20.0px;background:#d4ebd9"></div>
<div class="b" style="left:1069.5px;top:275.0px;width:1.0px;height:23.0px;background:#ece4e4"></div>
<svg class="b" style="left:12px;top:277.70000000000005px" width="14" height="13" viewBox="0 0 14 13"><rect x="0.7" y="0.7" width="12.6" height="11.6" fill="#fff" stroke="#5a5a5a" stroke-width="1.2"/></svg>
<svg class="b" style="left:52px;top:277.70000000000005px" width="14" height="13" viewBox="0 0 14 13"><rect x="0.75" y="0.75" width="12.5" height="11.5" fill="#fff" stroke="#555" stroke-width="1.4"/><path d="M3 6.3 L5.7 9.3 L11 2.8" fill="none" stroke="#111" stroke-width="2.1"/></svg>
<svg class="b" style="left:84px;top:277.5px" width="15" height="15" viewBox="0 0 15 15"><rect x="1" y="1" width="12.8" height="12.8" rx="2.4" fill="none" stroke="#111" stroke-width="1.5"/><path d="M3.8 7.3 L6.4 9.9 L11.2 4.3" fill="none" stroke="#111" stroke-width="1.4"/></svg>
<div class="t" style="left:135.2px;top:281.68px;font-size:11.6px;line-height:11.6px;color:#2b6cb8;text-decoration:underline;text-underline-offset:1.5px;letter-spacing:0.140px;">2508567</div>
<div class="t" style="left:191.0px;top:281.68px;font-size:11.6px;line-height:11.6px;color:#2b6cb8;text-decoration:underline;text-underline-offset:1.5px;letter-spacing:0.073px;">4034451314337</div>
<div class="t" style="left:285.5px;top:279.98px;font-size:11.6px;line-height:11.6px;color:#111;letter-spacing:0.045px;">Scharnberger + Hasenbein</div>
<div class="t" style="left:432.5px;top:279.98px;font-size:11.6px;line-height:11.6px;color:#111">5</div>
<div class="t" style="left:514.5px;top:279.98px;font-size:11.6px;line-height:11.6px;color:#111">442</div>
<div class="t" style="left:611.5px;top:279.98px;font-size:11.6px;line-height:11.6px;color:#111">3000</div>
<div class="t" style="left:729.5px;top:279.98px;font-size:11.6px;line-height:11.6px;color:#111">362</div>
<div class="t" style="left:807.5px;top:279.98px;font-size:11.6px;line-height:11.6px;color:#111">220-240</div>
<div class="t" style="left:923.5px;top:279.98px;font-size:11.6px;line-height:11.6px;color:#111">IP20</div>
<div class="t" style="left:1011.0px;top:279.98px;font-size:11.6px;line-height:11.6px;color:#111">nein</div>
<div class="t" style="left:1074.0px;top:279.98px;font-size:11.6px;line-height:11.6px;color:#111">88</div>
<div class="b" style="left:0.0px;top:299.0px;width:281.0px;height:22.0px;background:#f6f6f6"></div>
<div class="b" style="left:0.0px;top:321.0px;width:1231.0px;height:1.0px;background:#e3e3e3"></div>
<div class="b" style="left:39.0px;top:298.0px;width:1.0px;height:23.0px;background:#e3e3e3"></div>
<div class="b" style="left:79.0px;top:298.0px;width:1.0px;height:23.0px;background:#e3e3e3"></div>
<div class="b" style="left:129.0px;top:298.0px;width:1.0px;height:23.0px;background:#e3e3e3"></div>
<div class="b" style="left:185.0px;top:298.0px;width:1.0px;height:23.0px;background:#e3e3e3"></div>
<div class="b" style="left:281.0px;top:298.0px;width:1.0px;height:23.0px;background:#e3e3e3"></div>
<div class="b" style="left:282.5px;top:300.0px;width:144.0px;height:20.0px;background:#d4ebd9"></div>
<div class="b" style="left:281.0px;top:298.0px;width:1.0px;height:23.0px;background:#ece4e4"></div>
<div class="b" style="left:429.5px;top:300.0px;width:79.0px;height:20.0px;background:#d4ebd9"></div>
<div class="b" style="left:428.0px;top:298.0px;width:1.0px;height:23.0px;background:#ece4e4"></div>
<div class="b" style="left:511.5px;top:300.0px;width:94.0px;height:20.0px;background:#d4ebd9"></div>
<div class="b" style="left:510.0px;top:298.0px;width:1.0px;height:23.0px;background:#ece4e4"></div>
<div class="b" style="left:608.5px;top:300.0px;width:115.0px;height:20.0px;background:#d4ebd9"></div>
<div class="b" style="left:607.0px;top:298.0px;width:1.0px;height:23.0px;background:#ece4e4"></div>
<div class="b" style="left:726.5px;top:300.0px;width:75.0px;height:20.0px;background:#d4ebd9"></div>
<div class="b" style="left:725.0px;top:298.0px;width:1.0px;height:23.0px;background:#ece4e4"></div>
<div class="b" style="left:804.5px;top:300.0px;width:113.0px;height:20.0px;background:#d4ebd9"></div>
<div class="b" style="left:803.0px;top:298.0px;width:1.0px;height:23.0px;background:#ece4e4"></div>
<div class="b" style="left:920.5px;top:300.0px;width:84.5px;height:20.0px;background:#d4ebd9"></div>
<div class="b" style="left:919.0px;top:298.0px;width:1.0px;height:23.0px;background:#ece4e4"></div>
<div class="b" style="left:1008.0px;top:300.0px;width:60.0px;height:20.0px;background:#d4ebd9"></div>
<div class="b" style="left:1006.5px;top:298.0px;width:1.0px;height:23.0px;background:#ece4e4"></div>
<div class="b" style="left:1071.0px;top:300.0px;width:160.0px;height:20.0px;background:#d4ebd9"></div>
<div class="b" style="left:1069.5px;top:298.0px;width:1.0px;height:23.0px;background:#ece4e4"></div>
<svg class="b" style="left:12px;top:300.70000000000005px" width="14" height="13" viewBox="0 0 14 13"><rect x="0.7" y="0.7" width="12.6" height="11.6" fill="#fff" stroke="#5a5a5a" stroke-width="1.2"/></svg>
<svg class="b" style="left:52px;top:300.70000000000005px" width="14" height="13" viewBox="0 0 14 13"><rect x="0.75" y="0.75" width="12.5" height="11.5" fill="#fff" stroke="#555" stroke-width="1.4"/><path d="M3 6.3 L5.7 9.3 L11 2.8" fill="none" stroke="#111" stroke-width="2.1"/></svg>
<svg class="b" style="left:84px;top:300.5px" width="15" height="15" viewBox="0 0 15 15"><rect x="1" y="1" width="12.8" height="12.8" rx="2.4" fill="none" stroke="#111" stroke-width="1.5"/><path d="M3.8 7.3 L6.4 9.9 L11.2 4.3" fill="none" stroke="#111" stroke-width="1.4"/></svg>
<div class="t" style="left:135.2px;top:304.68px;font-size:11.6px;line-height:11.6px;color:#2b6cb8;text-decoration:underline;text-underline-offset:1.5px;letter-spacing:0.140px;">2508569</div>
<div class="t" style="left:191.0px;top:304.68px;font-size:11.6px;line-height:11.6px;color:#2b6cb8;text-decoration:underline;text-underline-offset:1.5px;letter-spacing:0.073px;">4034451314351</div>
<div class="t" style="left:285.5px;top:302.98px;font-size:11.6px;line-height:11.6px;color:#111;letter-spacing:0.045px;">Scharnberger + Hasenbein</div>
<div class="t" style="left:432.5px;top:302.98px;font-size:11.6px;line-height:11.6px;color:#111">9</div>
<div class="t" style="left:514.5px;top:302.98px;font-size:11.6px;line-height:11.6px;color:#111">716</div>
<div class="t" style="left:611.5px;top:302.98px;font-size:11.6px;line-height:11.6px;color:#111">3000</div>
<div class="t" style="left:729.5px;top:302.98px;font-size:11.6px;line-height:11.6px;color:#111">591</div>
<div class="t" style="left:807.5px;top:302.98px;font-size:11.6px;line-height:11.6px;color:#111">220-240</div>
<div class="t" style="left:923.5px;top:302.98px;font-size:11.6px;line-height:11.6px;color:#111">IP20</div>
<div class="t" style="left:1011.0px;top:302.98px;font-size:11.6px;line-height:11.6px;color:#111">nein</div>
<div class="t" style="left:1074.0px;top:302.98px;font-size:11.6px;line-height:11.6px;color:#111">80</div>
<div class="b" style="left:0.0px;top:344.0px;width:1231.0px;height:1.0px;background:#e3e3e3"></div>
<div class="b" style="left:39.0px;top:321.0px;width:1.0px;height:23.0px;background:#e3e3e3"></div>
<div class="b" style="left:79.0px;top:321.0px;width:1.0px;height:23.0px;background:#e3e3e3"></div>
<div class="b" style="left:129.0px;top:321.0px;width:1.0px;height:23.0px;background:#e3e3e3"></div>
<div class="b" style="left:185.0px;top:321.0px;width:1.0px;height:23.0px;background:#e3e3e3"></div>
<div class="b" style="left:281.0px;top:321.0px;width:1.0px;height:23.0px;background:#e3e3e3"></div>
<div class="b" style="left:282.5px;top:323.0px;width:144.0px;height:20.0px;background:#d4ebd9"></div>
<div class="b" style="left:281.0px;top:321.0px;width:1.0px;height:23.0px;background:#ece4e4"></div>
<div class="b" style="left:429.5px;top:323.0px;width:79.0px;height:20.0px;background:#d4ebd9"></div>
<div class="b" style="left:428.0px;top:321.0px;width:1.0px;height:23.0px;background:#ece4e4"></div>
<div class="b" style="left:511.5px;top:323.0px;width:94.0px;height:20.0px;background:#d4ebd9"></div>
<div class="b" style="left:510.0px;top:321.0px;width:1.0px;height:23.0px;background:#ece4e4"></div>
<div class="b" style="left:608.5px;top:323.0px;width:115.0px;height:20.0px;background:#d4ebd9"></div>
<div class="b" style="left:607.0px;top:321.0px;width:1.0px;height:23.0px;background:#ece4e4"></div>
<div class="b" style="left:726.5px;top:323.0px;width:75.0px;height:20.0px;background:#d4ebd9"></div>
<div class="b" style="left:725.0px;top:321.0px;width:1.0px;height:23.0px;background:#ece4e4"></div>
<div class="b" style="left:804.5px;top:323.0px;width:113.0px;height:20.0px;background:#d4ebd9"></div>
<div class="b" style="left:803.0px;top:321.0px;width:1.0px;height:23.0px;background:#ece4e4"></div>
<div class="b" style="left:920.5px;top:323.0px;width:84.5px;height:20.0px;background:#d4ebd9"></div>
<div class="b" style="left:919.0px;top:321.0px;width:1.0px;height:23.0px;background:#ece4e4"></div>
<div class="b" style="left:1008.0px;top:323.0px;width:60.0px;height:20.0px;background:#d4ebd9"></div>
<div class="b" style="left:1006.5px;top:321.0px;width:1.0px;height:23.0px;background:#ece4e4"></div>
<div class="b" style="left:1071.0px;top:323.0px;width:160.0px;height:20.0px;background:#d4ebd9"></div>
<div class="b" style="left:1069.5px;top:321.0px;width:1.0px;height:23.0px;background:#ece4e4"></div>
<svg class="b" style="left:12px;top:323.70000000000005px" width="14" height="13" viewBox="0 0 14 13"><rect x="0.7" y="0.7" width="12.6" height="11.6" fill="#fff" stroke="#5a5a5a" stroke-width="1.2"/></svg>
<svg class="b" style="left:52px;top:323.70000000000005px" width="14" height="13" viewBox="0 0 14 13"><rect x="0.75" y="0.75" width="12.5" height="11.5" fill="#fff" stroke="#555" stroke-width="1.4"/><path d="M3 6.3 L5.7 9.3 L11 2.8" fill="none" stroke="#111" stroke-width="2.1"/></svg>
<svg class="b" style="left:84px;top:323.5px" width="15" height="15" viewBox="0 0 15 15"><rect x="1" y="1" width="12.8" height="12.8" rx="2.4" fill="none" stroke="#111" stroke-width="1.5"/><path d="M3.8 7.3 L6.4 9.9 L11.2 4.3" fill="none" stroke="#111" stroke-width="1.4"/></svg>
<div class="t" style="left:135.2px;top:327.68px;font-size:11.6px;line-height:11.6px;color:#2b6cb8;text-decoration:underline;text-underline-offset:1.5px;letter-spacing:0.140px;">2508570</div>
<div class="t" style="left:191.0px;top:327.68px;font-size:11.6px;line-height:11.6px;color:#2b6cb8;text-decoration:underline;text-underline-offset:1.5px;letter-spacing:0.073px;">4034451314368</div>
<div class="t" style="left:285.5px;top:325.98px;font-size:11.6px;line-height:11.6px;color:#111;letter-spacing:0.045px;">Scharnberger + Hasenbein</div>
<div class="t" style="left:432.5px;top:325.98px;font-size:11.6px;line-height:11.6px;color:#111">9</div>
<div class="t" style="left:514.5px;top:325.98px;font-size:11.6px;line-height:11.6px;color:#111">850</div>
<div class="t" style="left:611.5px;top:325.98px;font-size:11.6px;line-height:11.6px;color:#111">4000</div>
<div class="t" style="left:729.5px;top:325.98px;font-size:11.6px;line-height:11.6px;color:#111">591</div>
<div class="t" style="left:807.5px;top:325.98px;font-size:11.6px;line-height:11.6px;color:#111">220-240</div>
<div class="t" style="left:923.5px;top:325.98px;font-size:11.6px;line-height:11.6px;color:#111">IP20</div>
<div class="t" style="left:1011.0px;top:325.98px;font-size:11.6px;line-height:11.6px;color:#111">nein</div>
<div class="t" style="left:1074.0px;top:325.98px;font-size:11.6px;line-height:11.6px;color:#111">94</div>
<div class="b" style="left:0.0px;top:345.0px;width:281.0px;height:22.0px;background:#f6f6f6"></div>
<div class="b" style="left:0.0px;top:367.0px;width:1231.0px;height:1.0px;background:#e3e3e3"></div>
<div class="b" style="left:39.0px;top:344.0px;width:1.0px;height:23.0px;background:#e3e3e3"></div>
<div class="b" style="left:79.0px;top:344.0px;width:1.0px;height:23.0px;background:#e3e3e3"></div>
<div class="b" style="left:129.0px;top:344.0px;width:1.0px;height:23.0px;background:#e3e3e3"></div>
<div class="b" style="left:185.0px;top:344.0px;width:1.0px;height:23.0px;background:#e3e3e3"></div>
<div class="b" style="left:281.0px;top:344.0px;width:1.0px;height:23.0px;background:#e3e3e3"></div>
<div class="b" style="left:282.5px;top:346.0px;width:144.0px;height:20.0px;background:#d4ebd9"></div>
<div class="b" style="left:281.0px;top:344.0px;width:1.0px;height:23.0px;background:#ece4e4"></div>
<div class="b" style="left:429.5px;top:346.0px;width:79.0px;height:20.0px;background:#d4ebd9"></div>
<div class="b" style="left:428.0px;top:344.0px;width:1.0px;height:23.0px;background:#ece4e4"></div>
<div class="b" style="left:511.5px;top:346.0px;width:94.0px;height:20.0px;background:#d4ebd9"></div>
<div class="b" style="left:510.0px;top:344.0px;width:1.0px;height:23.0px;background:#ece4e4"></div>
<div class="b" style="left:608.5px;top:346.0px;width:115.0px;height:20.0px;background:#d4ebd9"></div>
<div class="b" style="left:607.0px;top:344.0px;width:1.0px;height:23.0px;background:#ece4e4"></div>
<div class="b" style="left:726.5px;top:346.0px;width:75.0px;height:20.0px;background:#d4ebd9"></div>
<div class="b" style="left:725.0px;top:344.0px;width:1.0px;height:23.0px;background:#ece4e4"></div>
<div class="b" style="left:804.5px;top:346.0px;width:113.0px;height:20.0px;background:#d4ebd9"></div>
<div class="b" style="left:803.0px;top:344.0px;width:1.0px;height:23.0px;background:#ece4e4"></div>
<div class="b" style="left:920.5px;top:346.0px;width:84.5px;height:20.0px;background:#d4ebd9"></div>
<div class="b" style="left:919.0px;top:344.0px;width:1.0px;height:23.0px;background:#ece4e4"></div>
<div class="b" style="left:1008.0px;top:346.0px;width:60.0px;height:20.0px;background:#d4ebd9"></div>
<div class="b" style="left:1006.5px;top:344.0px;width:1.0px;height:23.0px;background:#ece4e4"></div>
<div class="b" style="left:1071.0px;top:346.0px;width:160.0px;height:20.0px;background:#d4ebd9"></div>
<div class="b" style="left:1069.5px;top:344.0px;width:1.0px;height:23.0px;background:#ece4e4"></div>
<svg class="b" style="left:12px;top:346.70000000000005px" width="14" height="13" viewBox="0 0 14 13"><rect x="0.7" y="0.7" width="12.6" height="11.6" fill="#fff" stroke="#5a5a5a" stroke-width="1.2"/></svg>
<svg class="b" style="left:52px;top:346.70000000000005px" width="14" height="13" viewBox="0 0 14 13"><rect x="0.75" y="0.75" width="12.5" height="11.5" fill="#fff" stroke="#555" stroke-width="1.4"/><path d="M3 6.3 L5.7 9.3 L11 2.8" fill="none" stroke="#111" stroke-width="2.1"/></svg>
<svg class="b" style="left:84.5px;top:349px" width="14" height="12" viewBox="0 0 14 12"><path d="M7 1 L13 11.2 L1 11.2 Z" fill="none" stroke="#111" stroke-width="1.2" stroke-linejoin="round"/><path d="M7 4.5 V8.3" stroke="#111" stroke-width="1.1"/><circle cx="7" cy="9.6" r="0.6" fill="#111"/></svg>
<div class="t" style="left:135.2px;top:350.68px;font-size:11.6px;line-height:11.6px;color:#2b6cb8;text-decoration:underline;text-underline-offset:1.5px;letter-spacing:0.140px;">2508757</div>
<div class="t" style="left:191.0px;top:350.68px;font-size:11.6px;line-height:11.6px;color:#2b6cb8;text-decoration:underline;text-underline-offset:1.5px;letter-spacing:0.073px;">4034451900806</div>
<div class="t" style="left:285.5px;top:348.98px;font-size:11.6px;line-height:11.6px;color:#111;letter-spacing:0.045px;">Scharnberger + Hasenbein</div>
<div class="t" style="left:432.5px;top:348.98px;font-size:11.6px;line-height:11.6px;color:#111">18</div>
<div class="t" style="left:514.5px;top:348.98px;font-size:11.6px;line-height:11.6px;color:#111">1300</div>
<div class="t" style="left:611.5px;top:348.98px;font-size:11.6px;line-height:11.6px;color:#111">3000</div>
<div class="t" style="left:807.5px;top:348.98px;font-size:11.6px;line-height:11.6px;color:#111">220-240</div>
<div class="t" style="left:923.5px;top:348.98px;font-size:11.6px;line-height:11.6px;color:#111">IP20</div>
<div class="t" style="left:1011.0px;top:348.98px;font-size:11.6px;line-height:11.6px;color:#111">nein</div>
<div class="t" style="left:1074.0px;top:348.98px;font-size:11.6px;line-height:11.6px;color:#111">73</div>
<div class="b" style="left:0.0px;top:390.0px;width:1231.0px;height:1.0px;background:#e3e3e3"></div>
<div class="b" style="left:39.0px;top:367.0px;width:1.0px;height:23.0px;background:#e3e3e3"></div>
<div class="b" style="left:79.0px;top:367.0px;width:1.0px;height:23.0px;background:#e3e3e3"></div>
<div class="b" style="left:129.0px;top:367.0px;width:1.0px;height:23.0px;background:#e3e3e3"></div>
<div class="b" style="left:185.0px;top:367.0px;width:1.0px;height:23.0px;background:#e3e3e3"></div>
<div class="b" style="left:281.0px;top:367.0px;width:1.0px;height:23.0px;background:#e3e3e3"></div>
<div class="b" style="left:282.5px;top:369.0px;width:144.0px;height:20.0px;background:#d4ebd9"></div>
<div class="b" style="left:281.0px;top:367.0px;width:1.0px;height:23.0px;background:#ece4e4"></div>
<div class="b" style="left:429.5px;top:369.0px;width:79.0px;height:20.0px;background:#d4ebd9"></div>
<div class="b" style="left:428.0px;top:367.0px;width:1.0px;height:23.0px;background:#ece4e4"></div>
<div class="b" style="left:511.5px;top:369.0px;width:94.0px;height:20.0px;background:#d4ebd9"></div>
<div class="b" style="left:510.0px;top:367.0px;width:1.0px;height:23.0px;background:#ece4e4"></div>
<div class="b" style="left:608.5px;top:369.0px;width:115.0px;height:20.0px;background:#d4ebd9"></div>
<div class="b" style="left:607.0px;top:367.0px;width:1.0px;height:23.0px;background:#ece4e4"></div>
<div class="b" style="left:726.5px;top:369.0px;width:75.0px;height:20.0px;background:#d4ebd9"></div>
<div class="b" style="left:725.0px;top:367.0px;width:1.0px;height:23.0px;background:#ece4e4"></div>
<div class="b" style="left:804.5px;top:369.0px;width:113.0px;height:20.0px;background:#d4ebd9"></div>
<div class="b" style="left:803.0px;top:367.0px;width:1.0px;height:23.0px;background:#ece4e4"></div>
<div class="b" style="left:920.5px;top:369.0px;width:84.5px;height:20.0px;background:#d4ebd9"></div>
<div class="b" style="left:919.0px;top:367.0px;width:1.0px;height:23.0px;background:#ece4e4"></div>
<div class="b" style="left:1008.0px;top:369.0px;width:60.0px;height:20.0px;background:#d4ebd9"></div>
<div class="b" style="left:1006.5px;top:367.0px;width:1.0px;height:23.0px;background:#ece4e4"></div>
<div class="b" style="left:1071.0px;top:369.0px;width:160.0px;height:20.0px;background:#d4ebd9"></div>
<div class="b" style="left:1069.5px;top:367.0px;width:1.0px;height:23.0px;background:#ece4e4"></div>
<svg class="b" style="left:12px;top:369.70000000000005px" width="14" height="13" viewBox="0 0 14 13"><rect x="0.7" y="0.7" width="12.6" height="11.6" fill="#fff" stroke="#5a5a5a" stroke-width="1.2"/></svg>
<svg class="b" style="left:52px;top:369.70000000000005px" width="14" height="13" viewBox="0 0 14 13"><rect x="0.75" y="0.75" width="12.5" height="11.5" fill="#fff" stroke="#555" stroke-width="1.4"/><path d="M3 6.3 L5.7 9.3 L11 2.8" fill="none" stroke="#111" stroke-width="2.1"/></svg>
<svg class="b" style="left:84px;top:369.5px" width="15" height="15" viewBox="0 0 15 15"><rect x="1" y="1" width="12.8" height="12.8" rx="2.4" fill="none" stroke="#111" stroke-width="1.5"/><path d="M3.8 7.3 L6.4 9.9 L11.2 4.3" fill="none" stroke="#111" stroke-width="1.4"/></svg>
<div class="t" style="left:135.2px;top:373.68px;font-size:11.6px;line-height:11.6px;color:#2b6cb8;text-decoration:underline;text-underline-offset:1.5px;letter-spacing:0.140px;">2508760</div>
<div class="t" style="left:191.0px;top:373.68px;font-size:11.6px;line-height:11.6px;color:#2b6cb8;text-decoration:underline;text-underline-offset:1.5px;letter-spacing:0.073px;">4034451901407</div>
<div class="t" style="left:285.5px;top:371.98px;font-size:11.6px;line-height:11.6px;color:#111;letter-spacing:0.045px;">Scharnberger + Hasenbein</div>
<div class="t" style="left:432.5px;top:371.98px;font-size:11.6px;line-height:11.6px;color:#111">7,5</div>
<div class="t" style="left:514.5px;top:371.98px;font-size:11.6px;line-height:11.6px;color:#111">450</div>
<div class="t" style="left:611.5px;top:371.98px;font-size:11.6px;line-height:11.6px;color:#111">3000-6000</div>
<div class="t" style="left:729.5px;top:371.98px;font-size:11.6px;line-height:11.6px;color:#111">122</div>
<div class="t" style="left:807.5px;top:371.98px;font-size:11.6px;line-height:11.6px;color:#111">220-240</div>
<div class="t" style="left:923.5px;top:371.98px;font-size:11.6px;line-height:11.6px;color:#111">IP20</div>
<div class="t" style="left:1011.0px;top:371.98px;font-size:11.6px;line-height:11.6px;color:#111">ja</div>
<div class="t" style="left:1074.0px;top:371.98px;font-size:11.6px;line-height:11.6px;color:#111">60</div>
</div>
<div class="b" style="left:1567px;top:241px;width:17px;height:386px;background:#f0f0f0"></div>
<div class="b" style="left:1568px;top:258px;width:15px;height:88px;background:#cdcdcd"></div>
<svg class="b" style="left:1571px;top:247px" width="9" height="5" viewBox="0 0 9 5"><path d="M0.5 4.5 L4.5 0.8 L8.5 4.5" fill="none" stroke="#a8a8a8" stroke-width="1"/></svg>
<svg class="b" style="left:1571px;top:617px" width="9" height="5" viewBox="0 0 9 5"><path d="M0.5 0.5 L4.5 4.2 L8.5 0.5" fill="none" stroke="#a8a8a8" stroke-width="1"/></svg>
<div class="b" style="left:336px;top:627px;width:1248px;height:18px;background:#f0f0f0"></div>
<div class="b" style="left:353px;top:628px;width:1100px;height:16px;background:#cdcdcd"></div>
<svg class="b" style="left:342px;top:632px" width="5" height="9" viewBox="0 0 5 9"><path d="M4.5 0.5 L0.8 4.5 L4.5 8.5" fill="none" stroke="#a8a8a8" stroke-width="1"/></svg>
<svg class="b" style="left:1556px;top:632px" width="5" height="9" viewBox="0 0 5 9"><path d="M0.5 0.5 L4.2 4.5 L0.5 8.5" fill="none" stroke="#a8a8a8" stroke-width="1"/></svg>
<div class="b" style="left:334.5px;top:661.5px;width:1251px;height:287px;background:#fff;border:1.3px solid #1aa0b4;border-radius:5px"></div>
<div class="t" style="left:343.5px;top:673.45px;font-size:14px;line-height:14px;font-weight:bold;color:#17a2b8;letter-spacing:0.024px;">Gefundene Merkmale</div>
<div class="t" style="left:488.6px;top:676.24px;font-size:10.7px;line-height:10.7px;font-weight:normal;color:#555;letter-spacing:0.324px;">(10)</div>
<div class="b" style="left:343px;top:695px;width:1234px;height:211px;background:#fff;border:1px solid #dadada"></div>
<div class="b" style="left:344px;top:696px;width:6px;height:209px;background:#f0f0f0;border-right:1px solid #d8d8d8"></div>
<div class="b" style="left:350px;top:696px;width:1208px;height:23px;background:linear-gradient(#fbfbfb,#f0f0f0);border-bottom:1px solid #d5d5d5"></div>
<div class="b" style="left:389.4px;top:696px;width:1px;height:23px;background:#dedede"></div>
<div class="b" style="left:861.5px;top:696px;width:1px;height:23px;background:#dedede"></div>
<div class="b" style="left:1333.6px;top:696px;width:1px;height:23px;background:#dedede"></div>
<div class="b" style="left:1389px;top:696px;width:1px;height:23px;background:#dedede"></div>
<div class="b" style="left:1448.8px;top:696px;width:1px;height:23px;background:#dedede"></div>
<div class="b" style="left:1503.5px;top:696px;width:1px;height:23px;background:#dedede"></div>
<div class="t" style="left:355.5px;top:702.74px;font-size:12px;line-height:12px;font-weight:normal;color:#222;">Nr.</div>
<div class="t" style="left:395.5px;top:702.74px;font-size:12px;line-height:12px;font-weight:normal;color:#222;">Original-Name</div>
<div class="t" style="left:867.4px;top:702.74px;font-size:12px;line-height:12px;font-weight:normal;color:#222;">Neuer Name</div>
<div class="t" style="left:1339px;top:702.74px;font-size:12px;line-height:12px;font-weight:normal;color:#222;">Anzahl</div>
<div class="t" style="left:1394px;top:702.74px;font-size:12px;line-height:12px;font-weight:normal;color:#222;">Relevant</div>
<div class="t" style="left:1453.9px;top:702.74px;font-size:12px;line-height:12px;font-weight:normal;color:#222;">Import</div>
<div class="t" style="left:1509px;top:702.74px;font-size:12px;line-height:12px;font-weight:normal;color:#222;">Ändern</div>
<div class="b" style="left:344px;top:719px;width:1214px;height:186px;overflow:hidden">
<div class="b" style="left:0.0px;top:22.9px;width:1214.0px;height:1.0px;background:#dcdcdc"></div>
<div class="t" style="left:6px;width:40px;text-align:center;top:6.54px;font-size:12px;line-height:12px;color:#222">1</div>
<div class="t" style="left:51.5px;top:6.54px;font-size:12px;line-height:12px;color:#666;letter-spacing:-0.005px;">Hersteller</div>
<div class="t" style="left:523.4px;top:6.80px;font-size:11.7px;line-height:11.7px;color:#111;font-weight:bold;letter-spacing:-0.076px;">Hersteller</div>
<div class="t" style="left:999.0px;top:6.54px;font-size:12px;line-height:12px;color:#222">61</div>
<svg class="b" style="left:1054.5px;top:3.4px" width="14" height="13" viewBox="0 0 14 13"><rect x="0.6" y="0.6" width="12.8" height="11.8" fill="#fff" stroke="#4a4a4a" stroke-width="1.1"/><path d="M2.4 6.4 L5.9 9.7 L11.2 2.4" fill="none" stroke="#222" stroke-width="2.0"/></svg>
<svg class="b" style="left:1114.5px;top:3.4px" width="14" height="13" viewBox="0 0 14 13"><rect x="0.6" y="0.6" width="12.8" height="11.8" fill="#fff" stroke="#4a4a4a" stroke-width="1.1"/><path d="M2.4 6.4 L5.9 9.7 L11.2 2.4" fill="none" stroke="#222" stroke-width="2.0"/></svg>
<svg class="b" style="left:1170px;top:3.4px" width="14" height="13" viewBox="0 0 14 13"><rect x="0.6" y="0.6" width="12.8" height="11.8" fill="#fff" stroke="#4a4a4a" stroke-width="1.1"/></svg>
<div class="b" style="left:6.0px;top:23.4px;width:1208.0px;height:23.0px;background:#eef6fd"></div>
<div class="b" style="left:0.0px;top:45.9px;width:1214.0px;height:1.0px;background:#dcdcdc"></div>
<div class="t" style="left:6px;width:40px;text-align:center;top:29.54px;font-size:12px;line-height:12px;color:#222">2</div>
<div class="t" style="left:51.5px;top:29.54px;font-size:12px;line-height:12px;color:#666;letter-spacing:-0.093px;">Leistung (W)</div>
<div class="t" style="left:523.4px;top:29.80px;font-size:11.7px;line-height:11.7px;color:#111;font-weight:bold;letter-spacing:-0.130px;">Leistung (W)</div>
<div class="t" style="left:999.0px;top:29.54px;font-size:12px;line-height:12px;color:#222">63</div>
<svg class="b" style="left:1054.5px;top:26.4px" width="14" height="13" viewBox="0 0 14 13"><rect x="0.6" y="0.6" width="12.8" height="11.8" fill="#fff" stroke="#4a4a4a" stroke-width="1.1"/><path d="M2.4 6.4 L5.9 9.7 L11.2 2.4" fill="none" stroke="#222" stroke-width="2.0"/></svg>
<svg class="b" style="left:1114.5px;top:26.4px" width="14" height="13" viewBox="0 0 14 13"><rect x="0.6" y="0.6" width="12.8" height="11.8" fill="#fff" stroke="#4a4a4a" stroke-width="1.1"/><path d="M2.4 6.4 L5.9 9.7 L11.2 2.4" fill="none" stroke="#222" stroke-width="2.0"/></svg>
<svg class="b" style="left:1170px;top:26.4px" width="14" height="13" viewBox="0 0 14 13"><rect x="0.6" y="0.6" width="12.8" height="11.8" fill="#fff" stroke="#4a4a4a" stroke-width="1.1"/></svg>
<div class="b" style="left:0.0px;top:68.9px;width:1214.0px;height:1.0px;background:#dcdcdc"></div>
<div class="t" style="left:6px;width:40px;text-align:center;top:52.54px;font-size:12px;line-height:12px;color:#222">3</div>
<div class="t" style="left:51.5px;top:52.54px;font-size:12px;line-height:12px;color:#666;letter-spacing:0.055px;">Lichtstrom (lm)</div>
<div class="t" style="left:523.4px;top:52.80px;font-size:11.7px;line-height:11.7px;color:#111;font-weight:bold;letter-spacing:-0.125px;">Lichtstrom (lm)</div>
<div class="t" style="left:999.0px;top:52.54px;font-size:12px;line-height:12px;color:#222">59</div>
<svg class="b" style="left:1054.5px;top:49.4px" width="14" height="13" viewBox="0 0 14 13"><rect x="0.6" y="0.6" width="12.8" height="11.8" fill="#fff" stroke="#4a4a4a" stroke-width="1.1"/><path d="M2.4 6.4 L5.9 9.7 L11.2 2.4" fill="none" stroke="#222" stroke-width="2.0"/></svg>
<svg class="b" style="left:1114.5px;top:49.4px" width="14" height="13" viewBox="0 0 14 13"><rect x="0.6" y="0.6" width="12.8" height="11.8" fill="#fff" stroke="#4a4a4a" stroke-width="1.1"/><path d="M2.4 6.4 L5.9 9.7 L11.2 2.4" fill="none" stroke="#222" stroke-width="2.0"/></svg>
<svg class="b" style="left:1170px;top:49.4px" width="14" height="13" viewBox="0 0 14 13"><rect x="0.6" y="0.6" width="12.8" height="11.8" fill="#fff" stroke="#4a4a4a" stroke-width="1.1"/></svg>
<div class="b" style="left:6.0px;top:69.4px;width:1208.0px;height:23.0px;background:#eef6fd"></div>
<div class="b" style="left:0.0px;top:91.9px;width:1214.0px;height:1.0px;background:#dcdcdc"></div>
<div class="t" style="left:6px;width:40px;text-align:center;top:75.54px;font-size:12px;line-height:12px;color:#222">4</div>
<div class="t" style="left:51.5px;top:75.54px;font-size:12px;line-height:12px;color:#666;letter-spacing:-0.131px;">Farbtemperatur (K)</div>
<div class="t" style="left:523.4px;top:75.80px;font-size:11.7px;line-height:11.7px;color:#111;font-weight:bold;letter-spacing:-0.115px;">Farbtemperatur (K)</div>
<div class="t" style="left:999.0px;top:75.54px;font-size:12px;line-height:12px;color:#222">59</div>
<svg class="b" style="left:1054.5px;top:72.4px" width="14" height="13" viewBox="0 0 14 13"><rect x="0.6" y="0.6" width="12.8" height="11.8" fill="#fff" stroke="#4a4a4a" stroke-width="1.1"/><path d="M2.4 6.4 L5.9 9.7 L11.2 2.4" fill="none" stroke="#222" stroke-width="2.0"/></svg>
<svg class="b" style="left:1114.5px;top:72.4px" width="14" height="13" viewBox="0 0 14 13"><rect x="0.6" y="0.6" width="12.8" height="11.8" fill="#fff" stroke="#4a4a4a" stroke-width="1.1"/><path d="M2.4 6.4 L5.9 9.7 L11.2 2.4" fill="none" stroke="#222" stroke-width="2.0"/></svg>
<svg class="b" style="left:1170px;top:72.4px" width="14" height="13" viewBox="0 0 14 13"><rect x="0.6" y="0.6" width="12.8" height="11.8" fill="#fff" stroke="#4a4a4a" stroke-width="1.1"/></svg>
<div class="b" style="left:0.0px;top:114.9px;width:1214.0px;height:1.0px;background:#dcdcdc"></div>
<div class="t" style="left:6px;width:40px;text-align:center;top:98.54px;font-size:12px;line-height:12px;color:#222">5</div>
<div class="t" style="left:51.5px;top:98.54px;font-size:12px;line-height:12px;color:#666;letter-spacing:-0.188px;">Länge (mm)</div>
<div class="t" style="left:523.4px;top:98.80px;font-size:11.7px;line-height:11.7px;color:#111;font-weight:bold;letter-spacing:-0.056px;">Länge (mm)</div>
<div class="t" style="left:999.0px;top:98.54px;font-size:12px;line-height:12px;color:#222">62</div>
<svg class="b" style="left:1054.5px;top:95.4px" width="14" height="13" viewBox="0 0 14 13"><rect x="0.6" y="0.6" width="12.8" height="11.8" fill="#fff" stroke="#4a4a4a" stroke-width="1.1"/><path d="M2.4 6.4 L5.9 9.7 L11.2 2.4" fill="none" stroke="#222" stroke-width="2.0"/></svg>
<svg class="b" style="left:1114.5px;top:95.4px" width="14" height="13" viewBox="0 0 14 13"><rect x="0.6" y="0.6" width="12.8" height="11.8" fill="#fff" stroke="#4a4a4a" stroke-width="1.1"/><path d="M2.4 6.4 L5.9 9.7 L11.2 2.4" fill="none" stroke="#222" stroke-width="2.0"/></svg>
<svg class="b" style="left:1170px;top:95.4px" width="14" height="13" viewBox="0 0 14 13"><rect x="0.6" y="0.6" width="12.8" height="11.8" fill="#fff" stroke="#4a4a4a" stroke-width="1.1"/></svg>
<div class="b" style="left:6.0px;top:115.4px;width:1208.0px;height:23.0px;background:#eef6fd"></div>
<div class="b" style="left:0.0px;top:137.9px;width:1214.0px;height:1.0px;background:#dcdcdc"></div>
<div class="t" style="left:6px;width:40px;text-align:center;top:121.54px;font-size:12px;line-height:12px;color:#222">6</div>
<div class="t" style="left:51.5px;top:121.54px;font-size:12px;line-height:12px;color:#666;letter-spacing:-0.089px;">Nennspannung (V)</div>
<div class="t" style="left:523.4px;top:121.80px;font-size:11.7px;line-height:11.7px;color:#111;font-weight:bold;letter-spacing:-0.066px;">Nennspannung (V)</div>
<div class="t" style="left:999.0px;top:121.54px;font-size:12px;line-height:12px;color:#222">64</div>
<svg class="b" style="left:1054.5px;top:118.4px" width="14" height="13" viewBox="0 0 14 13"><rect x="0.6" y="0.6" width="12.8" height="11.8" fill="#fff" stroke="#4a4a4a" stroke-width="1.1"/><path d="M2.4 6.4 L5.9 9.7 L11.2 2.4" fill="none" stroke="#222" stroke-width="2.0"/></svg>
<svg class="b" style="left:1114.5px;top:118.4px" width="14" height="13" viewBox="0 0 14 13"><rect x="0.6" y="0.6" width="12.8" height="11.8" fill="#fff" stroke="#4a4a4a" stroke-width="1.1"/><path d="M2.4 6.4 L5.9 9.7 L11.2 2.4" fill="none" stroke="#222" stroke-width="2.0"/></svg>
<svg class="b" style="left:1170px;top:118.4px" width="14" height="13" viewBox="0 0 14 13"><rect x="0.6" y="0.6" width="12.8" height="11.8" fill="#fff" stroke="#4a4a4a" stroke-width="1.1"/></svg>
<div class="b" style="left:0.0px;top:160.9px;width:1214.0px;height:1.0px;background:#dcdcdc"></div>
<div class="t" style="left:6px;width:40px;text-align:center;top:144.54px;font-size:12px;line-height:12px;color:#222">7</div>
<div class="t" style="left:51.5px;top:144.54px;font-size:12px;line-height:12px;color:#666;letter-spacing:-0.273px;">Schutzart (IP)</div>
<div class="t" style="left:523.4px;top:144.80px;font-size:11.7px;line-height:11.7px;color:#111;font-weight:bold;letter-spacing:-0.131px;">Schutzart (IP)</div>
<div class="t" style="left:999.0px;top:144.54px;font-size:12px;line-height:12px;color:#222">62</div>
<svg class="b" style="left:1054.5px;top:141.4px" width="14" height="13" viewBox="0 0 14 13"><rect x="0.6" y="0.6" width="12.8" height="11.8" fill="#fff" stroke="#4a4a4a" stroke-width="1.1"/><path d="M2.4 6.4 L5.9 9.7 L11.2 2.4" fill="none" stroke="#222" stroke-width="2.0"/></svg>
<svg class="b" style="left:1114.5px;top:141.4px" width="14" height="13" viewBox="0 0 14 13"><rect x="0.6" y="0.6" width="12.8" height="11.8" fill="#fff" stroke="#4a4a4a" stroke-width="1.1"/><path d="M2.4 6.4 L5.9 9.7 L11.2 2.4" fill="none" stroke="#222" stroke-width="2.0"/></svg>
<svg class="b" style="left:1170px;top:141.4px" width="14" height="13" viewBox="0 0 14 13"><rect x="0.6" y="0.6" width="12.8" height="11.8" fill="#fff" stroke="#4a4a4a" stroke-width="1.1"/></svg>
<div class="b" style="left:6.0px;top:161.4px;width:1208.0px;height:23.0px;background:#eef6fd"></div>
<div class="b" style="left:0.0px;top:183.9px;width:1214.0px;height:1.0px;background:#dcdcdc"></div>
<div class="t" style="left:6px;width:40px;text-align:center;top:167.54px;font-size:12px;line-height:12px;color:#222">8</div>
<div class="t" style="left:51.5px;top:167.54px;font-size:12px;line-height:12px;color:#666;letter-spacing:0.189px;">Dimmbar</div>
<div class="t" style="left:523.4px;top:167.80px;font-size:11.7px;line-height:11.7px;color:#111;font-weight:bold;letter-spacing:0.114px;">Dimmbar</div>
<div class="t" style="left:999.0px;top:167.54px;font-size:12px;line-height:12px;color:#222">43</div>
<svg class="b" style="left:1054.5px;top:164.4px" width="14" height="13" viewBox="0 0 14 13"><rect x="0.6" y="0.6" width="12.8" height="11.8" fill="#fff" stroke="#4a4a4a" stroke-width="1.1"/><path d="M2.4 6.4 L5.9 9.7 L11.2 2.4" fill="none" stroke="#222" stroke-width="2.0"/></svg>
<svg class="b" style="left:1114.5px;top:164.4px" width="14" height="13" viewBox="0 0 14 13"><rect x="0.6" y="0.6" width="12.8" height="11.8" fill="#fff" stroke="#4a4a4a" stroke-width="1.1"/><path d="M2.4 6.4 L5.9 9.7 L11.2 2.4" fill="none" stroke="#222" stroke-width="2.0"/></svg>
<svg class="b" style="left:1170px;top:164.4px" width="14" height="13" viewBox="0 0 14 13"><rect x="0.6" y="0.6" width="12.8" height="11.8" fill="#fff" stroke="#4a4a4a" stroke-width="1.1"/></svg>
</div>
<div class="b" style="left:1558px;top:696px;width:18px;height:209px;background:#f0f0f0"></div>
<div class="b" style="left:1559px;top:737px;width:16px;height:120px;background:#cdcdcd"></div>
<svg class="b" style="left:1563px;top:725px" width="9" height="5" viewBox="0 0 9 5"><path d="M0.5 4.5 L4.5 0.8 L8.5 4.5" fill="none" stroke="#a8a8a8" stroke-width="1"/></svg>
<svg class="b" style="left:1563px;top:893px" width="9" height="5" viewBox="0 0 9 5"><path d="M0.5 0.5 L4.5 4.2 L8.5 0.5" fill="none" stroke="#a8a8a8" stroke-width="1"/></svg>
<div class="b" style="left:771px;top:912px;width:400px;height:28px;background:#17a2b8;border-radius:4px"></div>
<div class="t" style="left:770.70px;width:400px;text-align:center;top:921.75px;font-size:9.75px;line-height:9.75px;font-weight:bold;color:#fff;letter-spacing:0.056px;">KI vereinheitlichen</div>
<div class="b" style="left:1177px;top:912px;width:400px;height:28px;background:#28a745;border-radius:4px"></div>
<div class="t" style="left:1177.00px;width:400px;text-align:center;top:921.62px;font-size:9.9px;line-height:9.9px;font-weight:bold;color:#fff;letter-spacing:0.136px;">Anwenden</div>
<div class="b" style="left:1624px;top:93px;width:248px;height:73px;background:#fff;border:1px solid #dce1e5;border-radius:5px"></div>
<div class="t" style="left:1635.4px;top:107.47px;font-size:11.5px;line-height:11.5px;font-weight:bold;color:#333;letter-spacing:0.070px;">Phase 1: Extraktion</div>
<div class="t" style="left:1635.4px;top:127.63px;font-size:10.6px;line-height:10.6px;font-weight:normal;color:#555;letter-spacing:0.181px;">Fertig</div>
<div class="t" style="left:1635.4px;top:144.22px;font-size:9.9px;line-height:9.9px;font-weight:normal;color:#777;letter-spacing:0.020px;">64 Artikel, 10 Merkmale (10 relevant)</div>
<div class="b" style="left:1624px;top:174px;width:248px;height:58px;background:#fff;border:1px solid #dce1e5;border-radius:5px"></div>
<div class="t" style="left:1635.4px;top:187.78px;font-size:11.6px;line-height:11.6px;font-weight:bold;color:#333;letter-spacing:0.067px;">Phase 2: Normalisierung</div>
<div class="t" style="left:1635.4px;top:208.59px;font-size:11px;line-height:11px;font-weight:normal;color:#555;letter-spacing:0.233px;">Optional</div>
<div class="b" style="left:1624px;top:240px;width:248px;height:121px;background:#fff;border:1px solid #dce1e5;border-radius:5px"></div>
<div class="t" style="left:1635.4px;top:253.43px;font-size:11.9px;line-height:11.9px;font-weight:bold;color:#333;letter-spacing:0.154px;">Optionen</div>
<svg class="b" style="left:1635.4px;top:279.5px" width="13" height="13" viewBox="0 0 13 13"><rect x="0.5" y="0.5" width="12" height="12" fill="#fff" stroke="#7a7a7a" stroke-width="1"/><path d="M2.5 6.8 L5.2 9.5 L10.5 3.2" fill="none" stroke="#222" stroke-width="1.3"/></svg>
<div class="t" style="left:1653.1px;top:280.29px;font-size:11px;line-height:11px;font-weight:normal;color:#333;">Nach Hersteller gruppieren</div>
<svg class="b" style="left:1635.4px;top:306.5px" width="13" height="13" viewBox="0 0 13 13"><rect x="0.5" y="0.5" width="12" height="12" fill="#fff" stroke="#7a7a7a" stroke-width="1"/><path d="M2.5 6.8 L5.2 9.5 L10.5 3.2" fill="none" stroke="#222" stroke-width="1.3"/></svg>
<div class="t" style="left:1653.1px;top:307.29px;font-size:11px;line-height:11px;font-weight:normal;color:#333;">KI-Wissen nutzen</div>
<svg class="b" style="left:1635.4px;top:333.5px" width="13" height="13" viewBox="0 0 13 13"><rect x="0.5" y="0.5" width="12" height="12" fill="#fff" stroke="#7a7a7a" stroke-width="1"/><path d="M2.5 6.8 L5.2 9.5 L10.5 3.2" fill="none" stroke="#222" stroke-width="1.3"/></svg>
<div class="t" style="left:1653.1px;top:334.29px;font-size:11px;line-height:11px;font-weight:normal;color:#333;">Fehlende Hersteller ergänzen</div>
<div class="b" style="left:1624px;top:370.5px;width:248px;height:168px;background:#fff;border:1px solid #dce1e5;border-radius:5px"></div>
<div class="t" style="left:1635.3px;top:383.75px;font-size:11.75px;line-height:11.75px;font-weight:bold;color:#333;letter-spacing:0.198px;">Export</div>
<svg class="b" style="left:1635px;top:409.3px" width="13" height="13" viewBox="0 0 13 13"><rect x="0.5" y="0.5" width="12" height="12" fill="#fff" stroke="#7a7a7a" stroke-width="1"/></svg>
<div class="t" style="left:1653.5px;top:410.69px;font-size:11px;line-height:11px;font-weight:normal;color:#333;">Nur vollständige</div>
<svg class="b" style="left:1635px;top:436.3px" width="13" height="13" viewBox="0 0 13 13"><rect x="0.5" y="0.5" width="12" height="12" fill="#fff" stroke="#7a7a7a" stroke-width="1"/></svg>
<div class="t" style="left:1653.5px;top:437.64px;font-size:11px;line-height:11px;font-weight:normal;color:#333;">Nur relevante Merkmale</div>
<svg class="b" style="left:1635px;top:463.3px" width="13" height="13" viewBox="0 0 13 13"><rect x="0.5" y="0.5" width="12" height="12" fill="#fff" stroke="#7a7a7a" stroke-width="1"/><path d="M2.5 6.8 L5.2 9.5 L10.5 3.2" fill="none" stroke="#222" stroke-width="1.3"/></svg>
<div class="t" style="left:1653.5px;top:464.59px;font-size:11px;line-height:11px;font-weight:normal;color:#333;">Komma zu Punkt</div>
<div class="t" style="left:1635px;top:491.27px;font-size:9.6px;line-height:9.6px;font-weight:normal;color:#444;letter-spacing:0.068px;">Trennzeichen:</div>
<div class="b" style="left:1635px;top:504.5px;width:226px;height:23px;background:#fff;border:1px solid #a9a9a9"></div>
<div class="t" style="left:1640px;top:510.14px;font-size:10.7px;line-height:10.7px;font-weight:normal;color:#333;letter-spacing:0.081px;">Semikolon (;)</div>
<svg class="b" style="left:1849px;top:514px" width="7.5" height="4" viewBox="0 0 7.5 4"><path d="M0 0 L7.5 0 L3.75 4 Z" fill="#333"/></svg>
<div class="b" style="left:1624px;top:547px;width:248px;height:38px;background:#28a745;border-radius:5px"></div>
<div class="t" style="left:1547.50px;width:400px;text-align:center;top:560.25px;font-size:12.7px;line-height:12.7px;font-weight:bold;color:#fff;letter-spacing:0.085px;">CSV exportieren</div>
<div class="b" style="left:1624px;top:595.8px;width:248px;height:91px;background:#fff;border:1px solid #dce1e5;border-radius:5px"></div>
<div class="t" style="left:1634.9px;top:608.72px;font-size:12.15px;line-height:12.15px;font-weight:bold;color:#333;letter-spacing:0.052px;">JTL-Import (Merkmale)</div>
<svg class="b" style="left:1635px;top:634.6px" width="13" height="13" viewBox="0 0 13 13"><rect x="0.5" y="0.5" width="12" height="12" fill="#fff" stroke="#7a7a7a" stroke-width="1"/><path d="M2.5 6.8 L5.2 9.5 L10.5 3.2" fill="none" stroke="#222" stroke-width="1.3"/></svg>
<div class="t" style="left:1653px;top:635.23px;font-size:10.6px;line-height:10.6px;font-weight:normal;color:#333;letter-spacing:0.075px;">Fehlende anlegen</div>
<svg class="b" style="left:1635px;top:659.5px" width="13" height="13" viewBox="0 0 13 13"><rect x="0.5" y="0.5" width="12" height="12" fill="#fff" stroke="#7a7a7a" stroke-width="1"/></svg>
<div class="t" style="left:1653px;top:660.22px;font-size:10.85px;line-height:10.85px;font-weight:normal;color:#333;letter-spacing:0.043px;">Vorhandene überschreiben</div>
<div class="b" style="left:1624px;top:696.5px;width:248px;height:37px;background:#dc3545;border-radius:5px"></div>
<div class="t" style="left:1548.00px;width:400px;text-align:center;top:708.88px;font-size:12.9px;line-height:12.9px;font-weight:bold;color:#fff;letter-spacing:0.041px;">In JTL importieren</div>
</body></html>
